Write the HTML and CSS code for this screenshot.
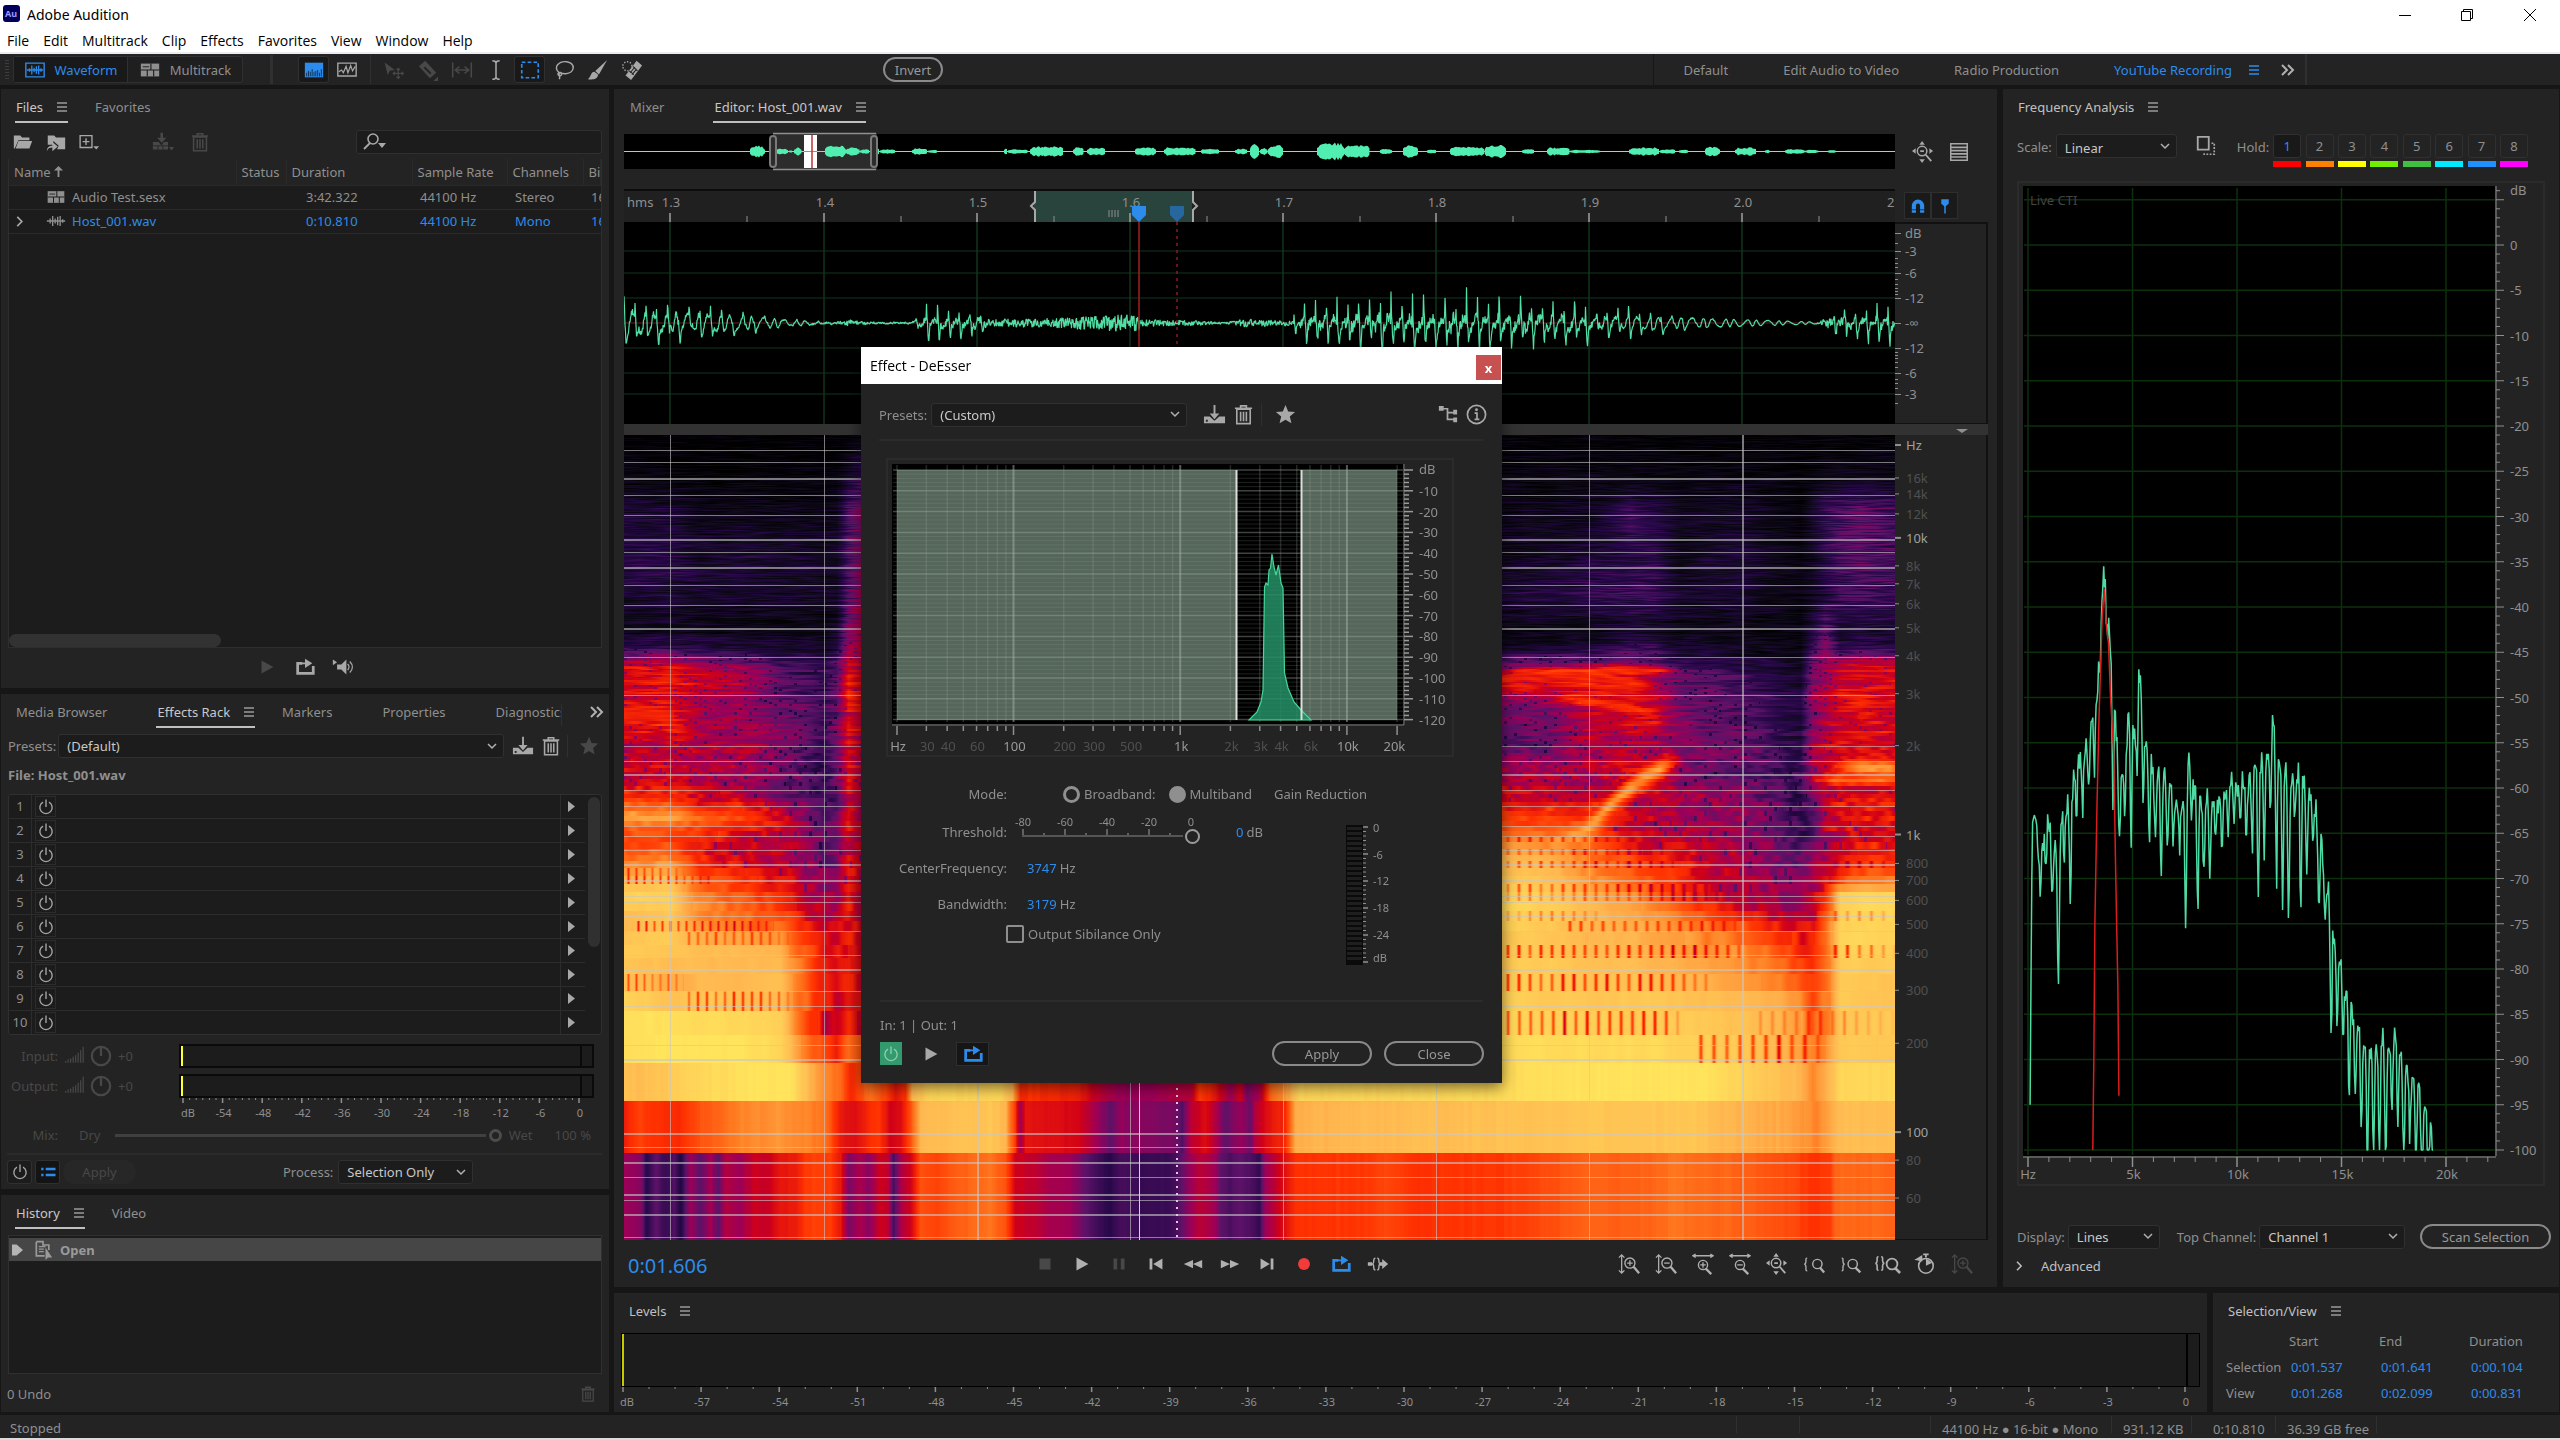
FILE: index.html
```html
<!DOCTYPE html>
<html lang="en">

<head>
    <meta charset="UTF-8">
    <meta name="viewport" content="width=device-width, initial-scale=1.0">
    <title>Adobe Audition</title>
    <link rel="stylesheet" href="styles.css">
</head>

<body>
    <!-- icon sprite -->
    <svg class="sprite" aria-hidden="true">
        <symbol id="i-menu" viewBox="0 0 10 10"><path d="M0 1h10M0 5h10M0 9h10" stroke="currentColor" stroke-width="1.4" /></symbol>
        <symbol id="i-more" viewBox="0 0 14 12"><path d="M1 1l5 5-5 5M7 1l5 5-5 5" fill="none" stroke="currentColor" stroke-width="2" /></symbol>
        <symbol id="i-wave" viewBox="0 0 24 24"><path d="M2 4.5h20v15H2z" fill="none" stroke="currentColor" stroke-width="1.5" /><path d="M3 12h18M6 10v4M8.5 7v10M11 9.5v5M13.5 8v8M16 7v10M18.5 10v4" stroke="currentColor" stroke-width="1.4" /></symbol>
        <symbol id="i-multi" viewBox="0 0 24 24"><path d="M2 5h20v14H2z" fill="currentColor" /><path d="M2 12h20M13 5v7M9 12v7M16 12v7" stroke="#1c1c1c" stroke-width="1.2" /><path d="M4 8.5h7" stroke="#1c1c1c" stroke-width="1" /></symbol>
        <symbol id="i-spectral" viewBox="0 0 24 24"><path d="M2 4h20v16H2z" fill="currentColor" /><path d="M4 19v-4M6 19v-6M8 19v-5M10 19v-8M12 19v-5M14 19v-6M16 19v-7M18 19v-4M20 19v-8" stroke="#10304f" stroke-width="1" /></symbol>
        <symbol id="i-pitch" viewBox="0 0 24 24"><path d="M2 4.5h20v14H2z" fill="none" stroke="currentColor" stroke-width="1.5" /><path d="M3 14l3-2 2 3 3-7 2 7 3-8 2 6 3-5" fill="none" stroke="currentColor" stroke-width="1.3" /></symbol>
        <symbol id="i-move" viewBox="0 0 26 24"><path d="M2 3l12 9-6 1-2.5 5z" fill="currentColor" /><path d="M18 10v12M12 16h12M16 12l2-2 2 2M16 20l2 2 2-2M14 14l-2 2 2 2M22 14l2 2-2 2" fill="none" stroke="currentColor" stroke-width="1.4" /></symbol>
        <symbol id="i-razor" viewBox="0 0 24 24"><path d="M2 8l7-6 12 13-7 6z" fill="currentColor" /><path d="M8 9l7 7" stroke="#232323" stroke-width="2" /><path d="M23 19v5h-5z" fill="currentColor" /></symbol>
        <symbol id="i-slip" viewBox="0 0 26 24"><path d="M2 3v18M24 3v18M6 12h14M10 8l-5 4 5 4M16 8l5 4-5 4" fill="none" stroke="currentColor" stroke-width="1.8" /></symbol>
        <symbol id="i-ibeam" viewBox="0 0 24 24"><path d="M8 2c2 0 4 .5 4 2.500v15c0 2-2 2.500-4 2.500M16 2c-2 0-4 .5-4 2.500v15c0 2 2 2.500 4 2.500" fill="none" stroke="currentColor" stroke-width="1.7" /></symbol>
        <symbol id="i-marquee" viewBox="0 0 24 24"><rect x="3" y="3.5" width="18" height="17" fill="none" stroke="currentColor" stroke-width="1.8" stroke-dasharray="4 2.4" /></symbol>
        <symbol id="i-lasso" viewBox="0 0 24 24"><path d="M7 15C-1 9 7 2 15 3c10 2 9 12-1 13-3 .3-5-.5-7-1zm0 0c2-1 3 1 2 2.500S5 18 5.500 16 8 19 7 22" fill="none" stroke="currentColor" stroke-width="1.6" /></symbol>
        <symbol id="i-brush" viewBox="0 0 24 24"><path d="M22 1L9 13l4 4zM8 14c-4 0-3 5-7 8 6 1 11 0 11-5z" fill="currentColor" /></symbol>
        <symbol id="i-heal" viewBox="0 0 24 24"><path d="M17 2l6 5L11 23l-6-5z" fill="currentColor" /><path d="M13 8l5 5M9 13l5 4M15 9l-5 6M17 11l-5 6" stroke="#232323" stroke-width="1.2" /><circle cx="7" cy="8" r="5" fill="none" stroke="currentColor" stroke-width="1.5" stroke-dasharray="1.5 1.7" /></symbol>
        <symbol id="i-folder" viewBox="0 0 24 24"><path d="M2 5h7l2 2h8v3H7L3 19H2z" fill="currentColor" /><path d="M7 11h15l-3 8H4z" fill="currentColor" /></symbol>
        <symbol id="i-import" viewBox="0 0 24 24"><path d="M3 5h7l2 2h10v13H13l2-4-6-5v4H3z" fill="currentColor" /><path d="M2 22c0-4 2-6 6-6v-4l6 5-6 5v-4c-3 0-5 1-6 4z" fill="currentColor" /></symbol>
        <symbol id="i-new" viewBox="0 0 26 24"><path d="M2.500 4.500h14v14h-14zM9.500 7.500v8M5.500 11.500h8" fill="none" stroke="currentColor" stroke-width="1.6" /><path d="M18 17h7l-3.500 4z" fill="currentColor" /></symbol>
        <symbol id="i-insert" viewBox="0 0 26 24"><path d="M1 12h7l3 4 3-4h5v9H1zM10 1h3v6h4l-5.500 6L6 7h4zM20 18h6l-3 4z" fill="currentColor" /><path d="M1 16.500h18M7 16v5M13 16v5" stroke="#232323" /></symbol>
        <symbol id="i-trash" viewBox="0 0 24 24"><path d="M5 6.500h14v15H5zM3 5.500h18M9 5V3h6v2M9 9v10M12 9v10M15 9v10" fill="none" stroke="currentColor" stroke-width="1.7" /></symbol>
        <symbol id="i-search" viewBox="0 0 24 20"><circle cx="10" cy="7" r="5" fill="none" stroke="currentColor" stroke-width="1.6" /><path d="M7 11l-6 6" stroke="currentColor" stroke-width="1.8" /><path d="M15 11h8l-4 5z" fill="currentColor" /></symbol>
        <symbol id="i-up" viewBox="0 0 12 12"><path d="M6 0l5 5H7v7H5V5H1z" fill="currentColor" /></symbol>
        <symbol id="i-clip" viewBox="0 0 24 24"><path d="M1 12h22M5 9v6M8 6v12M11 9v6M14 7v10M17 6v12M20 10v4" stroke="currentColor" stroke-width="1.6" /></symbol>
        <symbol id="i-chevron" viewBox="0 0 8 12"><path d="M1 1l5 5-5 5" fill="none" stroke="currentColor" stroke-width="1.8" /></symbol>
        <symbol id="i-play" viewBox="0 0 24 24"><path d="M6 5l13 7-13 7z" fill="currentColor" /></symbol>
        <symbol id="i-loop" viewBox="0 0 24 24"><path d="M9 8H4v11h17V11" fill="none" stroke="currentColor" stroke-width="3" /><path d="M8 7h4V3l8 5-8 5V9H8z" fill="currentColor" /></symbol>
        <symbol id="i-speaker" viewBox="0 0 26 24"><path d="M1 3v7l5-3.500zM6 9h5l6-6v18l-6-6H6z" fill="currentColor" /><path d="M18.500 8.500c2 2 2 5 0 7M21 5.500c4 4 4 9 0 13" fill="none" stroke="currentColor" stroke-width="1.6" /></symbol>
        <symbol id="i-save" viewBox="0 0 24 24"><path d="M1 14h6l5 4.500 5-4.500h6v7H1zM11 2h2v9h4l-5 6-5-6h4z" fill="currentColor" /><path d="M3 18.500h2" stroke="#232323" stroke-width="2" /></symbol>
        <symbol id="i-star" viewBox="0 0 24 24"><path d="M12 2l2.800 6.800 7.200.6-5.500 4.700 1.700 7.100L12 17.400l-6.200 3.800 1.700-7.100L2 9.400l7.200-.6z" fill="currentColor" /></symbol>
        <symbol id="i-power" viewBox="0 0 24 24"><path d="M8 5.500a8.200 8.200 0 1 0 8 0M12 2v10" fill="none" stroke="currentColor" stroke-width="1.8" /></symbol>
        <symbol id="i-ramp" viewBox="0 0 24 24"><path d="M2 20v-2M5 20v-4M8 20v-5M11 20v-7M14 20v-9M17 20V8M20 20V5M23 20V1" stroke="currentColor" stroke-width="1.5" /></symbol>
        <symbol id="i-knob" viewBox="0 0 24 24"><circle cx="12" cy="12" r="10" fill="none" stroke="currentColor" stroke-width="2.5" /><path d="M12 2v10" stroke="currentColor" stroke-width="2.5" /></symbol>
        <symbol id="i-list" viewBox="0 0 24 24"><path d="M3 8h3M3 16h3M9 8h13M9 16h13" stroke="currentColor" stroke-width="3.5" /></symbol>
        <symbol id="i-history" viewBox="0 0 24 24"><path d="M4 2h8v4h7v6M4 2v17h10" fill="none" stroke="currentColor" stroke-width="2" /><path d="M7 8h8M7 11h6M7 14h6" stroke="currentColor" stroke-width="1.5" /><path d="M15 9l8 12h-5l-3 3z" fill="currentColor" /></symbol>
        <symbol id="i-zoomfull" viewBox="0 0 24 24"><circle cx="11" cy="11" r="5.2" fill="none" stroke="currentColor" stroke-width="1.6" /><path d="M9 11h4M15 15l6 7" stroke="currentColor" stroke-width="2" /><path d="M11 0l3 4H8zM11 24l-3-4h6zM0 11l4-3v6zM23 11l-4-3v6z" fill="currentColor" /></symbol>
        <symbol id="i-rows" viewBox="0 0 24 24"><path d="M3 3h18v18H3z" fill="none" stroke="currentColor" stroke-width="1.6" /><path d="M3 7h18M3 10.500h18M3 14h18M3 17.500h18" stroke="currentColor" stroke-width="1.8" /></symbol>
        <symbol id="i-magnet" viewBox="0 0 24 24"><path d="M6.500 21v-9a5.500 6 0 0 1 11 0v9" fill="none" stroke="currentColor" stroke-width="5.5" /><path d="M3 17h7M14 17h7" stroke="#1a1a1a" /></symbol>
        <symbol id="i-pin" viewBox="0 0 24 24"><path d="M7 3h10v6l-5 4-5-4z" fill="currentColor" /><path d="M12 12v10" stroke="currentColor" stroke-width="2" /></symbol>
        <symbol id="i-copy" viewBox="0 0 24 24"><path d="M3 2h12v14H3z" fill="none" stroke="currentColor" stroke-width="2" /><path d="M18 9h3v12H10v-2" fill="none" stroke="currentColor" stroke-width="1.8" stroke-dasharray="2 1.6" /></symbol>
        <symbol id="i-stop" viewBox="0 0 24 24"><path d="M6 6h12v12H6z" fill="currentColor" /></symbol>
        <symbol id="i-pause" viewBox="0 0 24 24"><path d="M6 6h4v12H6zM14 6h4v12h-4z" fill="currentColor" /></symbol>
        <symbol id="i-start" viewBox="0 0 24 24"><path d="M5 6h3v12H5zM19 6v12l-10-6z" fill="currentColor" /></symbol>
        <symbol id="i-end" viewBox="0 0 24 24"><path d="M16 6h3v12h-3zM5 6v12l10-6z" fill="currentColor" /></symbol>
        <symbol id="i-rew" viewBox="0 0 24 24"><path d="M12 7.500v9L2 12zM22 7.500v9L12 12z" fill="currentColor" /></symbol>
        <symbol id="i-ff" viewBox="0 0 24 24"><path d="M2 7.500v9l10-4.500zM12 7.500v9l10-4.500z" fill="currentColor" /></symbol>
        <symbol id="i-rec" viewBox="0 0 24 24"><circle cx="12" cy="12" r="6.5" fill="currentColor" /></symbol>
        <symbol id="i-skip" viewBox="0 0 26 24"><path d="M1 10h5v4H1zM15 10h3V6l7 6-7 6v-4h-3z" fill="currentColor" /><path d="M10 5c-2 0-2 1-2 3s-.5 4-2 4c1.500 0 2 2 2 4s0 3 2 3M12 5c2 0 2 1 2 3s.5 4 2 4c-1.500 0-2 2-2 4s0 3-2 3" fill="none" stroke="currentColor" stroke-width="1.6" /></symbol>
        <symbol id="i-zin-v" viewBox="0 0 24 24"><path d="M4 3v18M1 5l3-3 3 3M1 19l3 3 3-3" fill="none" stroke="currentColor" stroke-width="1.4" /><circle cx="13" cy="11" r="5.5" fill="none" stroke="currentColor" stroke-width="1.5" /><path d="M10 11h6M13 8v6" stroke="currentColor" stroke-width="1.4" /><path d="M17 15l6 7" stroke="currentColor" stroke-width="2.5" /></symbol>
        <symbol id="i-zout-v" viewBox="0 0 24 24"><path d="M4 3v18M1 5l3-3 3 3M1 19l3 3 3-3" fill="none" stroke="currentColor" stroke-width="1.4" /><circle cx="13" cy="11" r="5.5" fill="none" stroke="currentColor" stroke-width="1.5" /><path d="M10 11h6" stroke="currentColor" stroke-width="1.4" /><path d="M17 15l6 7" stroke="currentColor" stroke-width="2.5" /></symbol>
        <symbol id="i-zin-h" viewBox="0 0 24 24"><path d="M2 3h20M4 1L1 3l3 2M20 1l3 2-3 2" fill="none" stroke="currentColor" stroke-width="1.4" /><circle cx="12" cy="13" r="5" fill="none" stroke="currentColor" stroke-width="1.5" /><path d="M9 13h6M12 10v6" stroke="currentColor" stroke-width="1.4" /><path d="M15 17l6 6" stroke="currentColor" stroke-width="2.5" /></symbol>
        <symbol id="i-zout-h" viewBox="0 0 24 24"><path d="M2 3h20M4 1L1 3l3 2M20 1l3 2-3 2" fill="none" stroke="currentColor" stroke-width="1.4" /><circle cx="12" cy="13" r="5" fill="none" stroke="currentColor" stroke-width="1.5" /><path d="M9 13h6" stroke="currentColor" stroke-width="1.4" /><path d="M15 17l6 6" stroke="currentColor" stroke-width="2.5" /></symbol>
        <symbol id="i-z-in" viewBox="0 0 26 24"><path d="M5 5c-2 0-1.500 2-1.500 4S3 12 1.500 12.500c1.500 0 2 1 2 3.500s-.5 4 1.500 4" fill="none" stroke="currentColor" stroke-width="1.6" /><circle cx="17" cy="12" r="5.5" fill="none" stroke="currentColor" stroke-width="1.7" /><path d="M20 16l5 6" stroke="currentColor" stroke-width="2.8" /></symbol>
        <symbol id="i-z-out" viewBox="0 0 26 24"><path d="M2 5c2 0 1.500 2 1.500 4s.5 3 2 3.500c-1.500 0-2 1-2 3.500s.5 4-1.500 4" fill="none" stroke="currentColor" stroke-width="1.6" /><circle cx="15" cy="12" r="5.5" fill="none" stroke="currentColor" stroke-width="1.7" /><path d="M18 16l6 6" stroke="currentColor" stroke-width="2.8" /></symbol>
        <symbol id="i-z-sel" viewBox="0 0 30 24"><path d="M5 4c-2 0-1.500 2-1.500 4S3 11 1.500 11.500c1.500 0 2 1 2 3.500s-.5 4 1.500 4M8 4c2 0 1.500 2 1.500 4s.5 3 2 3.500c-1.500 0-2 1-2 3.500s.5 4-1.500 4" fill="none" stroke="currentColor" stroke-width="1.8" /><circle cx="20" cy="12" r="6" fill="none" stroke="currentColor" stroke-width="2" /><path d="M23 16l6 6" stroke="currentColor" stroke-width="3" /></symbol>
        <symbol id="i-timer" viewBox="0 0 24 24"><circle cx="13" cy="14" r="8" fill="none" stroke="currentColor" stroke-width="1.7" /><path d="M13 14V6l7 4.500z" fill="currentColor" /><path d="M13 5V2M10 1.500h6M3 7l5-3v4z" stroke="currentColor" stroke-width="2" fill="currentColor" /></symbol>
        <symbol id="i-route" viewBox="0 0 24 24"><path d="M4 6h8v11h7M12 10h7" fill="none" stroke="currentColor" stroke-width="1.8" /><path d="M3 3h5v5H3zM18 7h4v5h-4zM18 15h4v5h-4z" fill="currentColor" /></symbol>
        <symbol id="i-info" viewBox="0 0 24 24"><circle cx="12" cy="12" r="9.5" fill="none" stroke="currentColor" stroke-width="1.8" /><path d="M10 10.500h2.500V17M10 17h5" fill="none" stroke="currentColor" stroke-width="1.8" /><circle cx="12" cy="7" r="1.5" fill="currentColor" /></symbol>
    </svg>

    <header class="titlebar">
        <svg class="app-logo" viewBox="0 0 17 17"><rect width="17" height="17" rx="3" fill="#00005b" /><text x="8" y="12" text-anchor="middle" class="logo-text">Au</text></svg>
        <h1>Adobe Audition</h1>
        <div class="window-controls">
            <button type="button" aria-label="Minimize"><svg viewBox="0 0 14 14"><path d="M1 7.500h12" /></svg></button>
            <button type="button" aria-label="Restore"><svg viewBox="0 0 14 14"><path d="M1.500 3.500h9v9h-9zM3.500 3.500v-2h9v9h-2" /></svg></button>
            <button type="button" aria-label="Close window"><svg viewBox="0 0 14 14"><path d="M1 1l12 12M13 1L1 13" /></svg></button>
        </div>
    </header>
    <nav class="menubar">
        <a href="#">File</a><a href="#">Edit</a><a href="#">Multitrack</a><a href="#">Clip</a><a href="#">Effects</a><a href="#">Favorites</a><a href="#">View</a><a href="#">Window</a><a href="#">Help</a>
    </nav>

    <div class="toolbar">
        <span class="grip"></span>
        <div class="mode-switch">
            <button type="button" class="active"><svg class="ic"><use href="#i-wave" /></svg>Waveform</button>
            <button type="button"><svg class="ic"><use href="#i-multi" /></svg>Multitrack</button>
        </div>
        <span class="divider wide"></span>
        <div class="tool-group">
            <button type="button" class="tool on" aria-label="Spectral frequency"><svg class="ic"><use href="#i-spectral" /></svg></button>
            <button type="button" class="tool" aria-label="Spectral pitch"><svg class="ic"><use href="#i-pitch" /></svg></button>
        </div>
        <span class="divider"></span>
        <div class="tool-group tools">
            <button type="button" class="tool" disabled aria-label="Move"><svg class="ic"><use href="#i-move" /></svg></button>
            <button type="button" class="tool" disabled aria-label="Razor"><svg class="ic"><use href="#i-razor" /></svg></button>
            <button type="button" class="tool" disabled aria-label="Slip"><svg class="ic"><use href="#i-slip" /></svg></button>
            <button type="button" class="tool" aria-label="Time selection"><svg class="ic"><use href="#i-ibeam" /></svg></button>
            <button type="button" class="tool on" aria-label="Marquee"><svg class="ic"><use href="#i-marquee" /></svg></button>
            <button type="button" class="tool" aria-label="Lasso"><svg class="ic"><use href="#i-lasso" /></svg></button>
            <button type="button" class="tool" aria-label="Brush"><svg class="ic"><use href="#i-brush" /></svg></button>
            <button type="button" class="tool" aria-label="Spot healing"><svg class="ic"><use href="#i-heal" /></svg></button>
        </div>
        <button type="button" class="pill invert">Invert</button>
        <nav class="workspaces">
            <a href="#">Default</a>
            <a href="#">Edit Audio to Video</a>
            <a href="#">Radio Production</a>
            <a href="#" class="current">YouTube Recording</a>
            <svg class="burger blue"><use href="#i-menu" /></svg>
            <svg class="more"><use href="#i-more" /></svg>
        </nav>
    </div>

    <main class="workspace">
        <div class="left-col">
            <section class="panel files">
                <div class="tabs">
                    <a href="#" class="tab current">Files<svg class="burger"><use href="#i-menu" /></svg></a>
                    <a href="#" class="tab">Favorites</a>
                </div>
                <div class="files-tools">
                    <button type="button" aria-label="Open file"><svg class="ic"><use href="#i-folder" /></svg></button>
                    <button type="button" aria-label="Import file"><svg class="ic"><use href="#i-import" /></svg></button>
                    <button type="button" aria-label="New file"><svg class="ic"><use href="#i-new" /></svg></button>
                    <button type="button" class="insert" disabled aria-label="Insert into multitrack"><svg class="ic"><use href="#i-insert" /></svg></button>
                    <button type="button" disabled aria-label="Close files"><svg class="ic"><use href="#i-trash" /></svg></button>
                    <label class="search"><svg><use href="#i-search" /></svg><input type="text" aria-label="Search files"></label>
                </div>
                <div class="file-list">
                    <table>
                        <colgroup><col class="c-name"><col class="c-status"><col class="c-dur"><col class="c-rate"><col class="c-ch"><col></colgroup>
                        <thead>
                            <tr><th>Name<svg class="sort"><use href="#i-up" /></svg></th><th>Status</th><th>Duration</th><th>Sample Rate</th><th>Channels</th><th>Bit</th></tr>
                        </thead>
                        <tbody>
                            <tr>
                                <td><span class="fname"><span class="twirl"></span><svg class="ic"><use href="#i-multi" /></svg>Audio Test.sesx</span></td>
                                <td></td><td class="num">3:42.322</td><td>44100 Hz</td><td>Stereo</td><td>16</td>
                            </tr>
                            <tr class="open">
                                <td><span class="fname"><svg class="twirl"><use href="#i-chevron" /></svg><svg class="ic"><use href="#i-clip" /></svg>Host_001.wav</span></td>
                                <td></td><td class="num">0:10.810</td><td>44100 Hz</td><td>Mono</td><td>16</td>
                            </tr>
                        </tbody>
                    </table>
                    <div class="hscroll"></div>
                </div>
                <div class="preview">
                    <button type="button" disabled aria-label="Play preview"><svg class="ic"><use href="#i-play" /></svg></button>
                    <button type="button" aria-label="Loop preview"><svg class="ic"><use href="#i-loop" /></svg></button>
                    <button type="button" aria-label="Auto-play"><svg class="ic"><use href="#i-speaker" /></svg></button>
                </div>
            </section>

            <section class="panel rack">
                <div class="tabs">
                    <a href="#" class="tab">Media Browser</a>
                    <a href="#" class="tab current">Effects Rack<svg class="burger"><use href="#i-menu" /></svg></a>
                    <a href="#" class="tab">Markers</a>
                    <a href="#" class="tab">Properties</a>
                    <a href="#" class="tab cut">Diagnostics</a>
                    <svg class="more"><use href="#i-more" /></svg>
                </div>
                <div class="presets">
                    <label for="rack-preset">Presets:</label>
                    <select id="rack-preset"><option>(Default)</option></select>
                    <button type="button" aria-label="Save preset"><svg class="ic"><use href="#i-save" /></svg></button>
                    <button type="button" aria-label="Delete preset"><svg class="ic"><use href="#i-trash" /></svg></button>
                    <button type="button" class="fav" disabled aria-label="Favorite"><svg class="ic"><use href="#i-star" /></svg></button>
                </div>
                <p class="rack-file">File: Host_001.wav</p>
                <div class="slots">
                    <ol id="slots"></ol>
                    <div class="vscroll"></div>
                </div>
                <div class="io">
                    <div class="io-row">
                        <span class="io-label">Input:</span><svg><use href="#i-ramp" /></svg><svg><use href="#i-knob" /></svg><span>+0</span>
                        <div class="meter"></div>
                    </div>
                    <div class="io-row">
                        <span class="io-label">Output:</span><svg><use href="#i-ramp" /></svg><svg><use href="#i-knob" /></svg><span>+0</span>
                        <div class="meter"></div>
                    </div>
                    <svg id="io-scale" class="io-scale"></svg>
                    <div class="mix">
                        <label for="mix">Mix:</label><span>Dry</span>
                        <input type="range" id="mix" value="100" disabled>
                        <span>Wet</span><span class="pct">100 %</span>
                    </div>
                </div>
                <div class="rack-foot">
                    <button type="button" class="sq" aria-label="Rack power"><svg class="ic"><use href="#i-power" /></svg></button>
                    <button type="button" class="sq on" aria-label="Show list"><svg class="ic"><use href="#i-list" /></svg></button>
                    <button type="button" class="ghost" disabled>Apply</button>
                    <label for="process">Process:</label>
                    <select id="process"><option>Selection Only</option></select>
                </div>
            </section>

            <section class="panel history">
                <div class="tabs">
                    <a href="#" class="tab current">History<svg class="burger"><use href="#i-menu" /></svg></a>
                    <a href="#" class="tab">Video</a>
                </div>
                <div class="history-list">
                    <div class="history-item"><svg class="mark" viewBox="0 0 12 12"><path d="M0 0h5l7 6-7 6H0z" fill="currentColor" /></svg><svg class="ic"><use href="#i-history" /></svg>Open</div>
                </div>
                <div class="history-foot">
                    <span>0 Undo</span>
                    <button type="button" disabled aria-label="Delete"><svg class="ic"><use href="#i-trash" /></svg></button>
                </div>
            </section>
        </div>

        <div class="right-col">
            <div class="upper">
                <section class="panel editor">
                    <div class="tabs">
                        <a href="#" class="tab">Mixer</a>
                        <a href="#" class="tab current">Editor: Host_001.wav<svg class="burger"><use href="#i-menu" /></svg></a>
                    </div>
                    <div class="editor-grid">
                        <svg id="overview" class="overview"></svg>
                        <div class="ov-tools">
                            <button type="button" aria-label="Zoom full"><svg class="ic"><use href="#i-zoomfull" /></svg></button>
                            <button type="button" aria-label="Track view"><svg class="ic"><use href="#i-rows" /></svg></button>
                        </div>
                        <svg id="ruler" class="ruler"></svg>
                        <div class="snap">
                            <button type="button" aria-label="Snapping"><svg class="ic"><use href="#i-magnet" /></svg></button>
                            <button type="button" aria-label="Pin"><svg class="ic"><use href="#i-pin" /></svg></button>
                        </div>
                        <svg id="wave" class="wave"></svg>
                        <svg id="db-scale" class="side-scale top"></svg>
                        <div class="splitter"><svg viewBox="0 0 12 4"><path d="M0 0h12L6 4z" fill="#8f8f8f" /></svg></div>
                        <div class="spectral"><canvas id="spectral"></canvas></div>
                        <svg id="hz-scale" class="side-scale"></svg>
                    </div>
                    <div class="transport">
                        <output class="timecode">0:01.606</output>
                        <div class="btns play-btns">
                            <button type="button" disabled aria-label="Stop"><svg class="ic"><use href="#i-stop" /></svg></button>
                            <button type="button" aria-label="Play"><svg class="ic"><use href="#i-play" /></svg></button>
                            <button type="button" disabled aria-label="Pause"><svg class="ic"><use href="#i-pause" /></svg></button>
                            <button type="button" aria-label="Go to start"><svg class="ic"><use href="#i-start" /></svg></button>
                            <button type="button" aria-label="Rewind"><svg class="ic"><use href="#i-rew" /></svg></button>
                            <button type="button" aria-label="Fast forward"><svg class="ic"><use href="#i-ff" /></svg></button>
                            <button type="button" aria-label="Go to end"><svg class="ic"><use href="#i-end" /></svg></button>
                            <button type="button" class="rec" aria-label="Record"><svg class="ic"><use href="#i-rec" /></svg></button>
                            <button type="button" class="lit" aria-label="Loop"><svg class="ic"><use href="#i-loop" /></svg></button>
                            <button type="button" aria-label="Skip selection"><svg class="ic"><use href="#i-skip" /></svg></button>
                        </div>
                        <div class="btns zoom-btns">
                            <button type="button" aria-label="Zoom in amplitude"><svg class="ic"><use href="#i-zin-v" /></svg></button>
                            <button type="button" aria-label="Zoom out amplitude"><svg class="ic"><use href="#i-zout-v" /></svg></button>
                            <button type="button" aria-label="Zoom in time"><svg class="ic"><use href="#i-zin-h" /></svg></button>
                            <button type="button" aria-label="Zoom out time"><svg class="ic"><use href="#i-zout-h" /></svg></button>
                            <button type="button" aria-label="Zoom out full"><svg class="ic"><use href="#i-zoomfull" /></svg></button>
                            <button type="button" aria-label="Zoom to in point"><svg class="ic"><use href="#i-z-in" /></svg></button>
                            <button type="button" aria-label="Zoom to out point"><svg class="ic"><use href="#i-z-out" /></svg></button>
                            <button type="button" aria-label="Zoom to selection"><svg class="ic big"><use href="#i-z-sel" /></svg></button>
                            <button type="button" aria-label="Zoom to time"><svg class="ic"><use href="#i-timer" /></svg></button>
                            <button type="button" disabled aria-label="Zoom selected track"><svg class="ic"><use href="#i-zin-v" /></svg></button>
                        </div>
                    </div>
                </section>

                <section class="panel freq">
                    <div class="tabs">
                        <span class="tab title">Frequency Analysis<svg class="burger"><use href="#i-menu" /></svg></span>
                    </div>
                    <div class="freq-top">
                        <label for="scale">Scale:</label>
                        <select id="scale"><option>Linear</option></select>
                        <button type="button" class="copy" aria-label="Copy data"><svg class="ic"><use href="#i-copy" /></svg></button>
                        <span class="hold-label">Hold:</span>
                        <div class="holds">
                            <button type="button" class="h1 on">1</button><button type="button" class="h2">2</button><button type="button" class="h3">3</button><button type="button" class="h4">4</button><button type="button" class="h5">5</button><button type="button" class="h6">6</button><button type="button" class="h7">7</button><button type="button" class="h8">8</button>
                        </div>
                    </div>
                    <svg id="freq-plot" class="freq-plot"></svg>
                    <div class="freq-bottom">
                        <label for="display">Display:</label>
                        <select id="display"><option>Lines</option></select>
                        <label for="channel">Top Channel:</label>
                        <select id="channel"><option>Channel 1</option></select>
                        <button type="button" class="pill">Scan Selection</button>
                    </div>
                    <button type="button" class="advanced"><svg><use href="#i-chevron" /></svg>Advanced</button>
                </section>
            </div>

            <div class="lower">
                <section class="panel levels">
                    <div class="tabs"><span class="tab title">Levels<svg class="burger"><use href="#i-menu" /></svg></span></div>
                    <div class="level-meter"></div>
                    <svg id="level-scale" class="level-scale"></svg>
                </section>
                <section class="panel selview">
                    <div class="tabs"><span class="tab title">Selection/View<svg class="burger"><use href="#i-menu" /></svg></span></div>
                    <table>
                        <thead><tr><td></td><th>Start</th><th>End</th><th>Duration</th></tr></thead>
                        <tbody>
                            <tr><th>Selection</th><td>0:01.537</td><td>0:01.641</td><td>0:00.104</td></tr>
                            <tr><th>View</th><td>0:01.268</td><td>0:02.099</td><td>0:00.831</td></tr>
                        </tbody>
                    </table>
                </section>
            </div>
        </div>
    </main>

    <footer class="statusbar">
        <span class="state">Stopped</span>
        <span class="cell s1"></span><span class="cell s2"></span>
        <span class="cell s3">44100 Hz ● 16-bit ● Mono</span>
        <span class="cell s4">931.12 KB</span>
        <span class="cell s5">0:10.810</span>
        <span class="cell s6">36.39 GB free</span>
    </footer>

    <div class="dialog" role="dialog" aria-labelledby="dlg-title">
        <div class="dlg-head">
            <h2 id="dlg-title">Effect - DeEsser</h2>
            <button type="button">x</button>
        </div>
        <div class="dlg-presets">
            <label for="dlg-preset">Presets:</label>
            <select id="dlg-preset"><option>(Custom)</option></select>
            <button type="button" aria-label="Save preset"><svg class="ic"><use href="#i-save" /></svg></button>
            <button type="button" aria-label="Delete preset"><svg class="ic"><use href="#i-trash" /></svg></button>
            <button type="button" class="fav" aria-label="Favorite"><svg class="ic"><use href="#i-star" /></svg></button>
            <button type="button" class="route" aria-label="Channel map"><svg class="ic"><use href="#i-route" /></svg></button>
            <button type="button" aria-label="Info"><svg class="ic"><use href="#i-info" /></svg></button>
        </div>
        <svg id="dlg-plot" class="dlg-plot"></svg>
        <div class="dlg-controls">
            <div class="params">
                <div class="param mode">
                    <span class="p-label">Mode:</span>
                    <label class="radio first"><input type="radio" name="mode">Broadband:</label>
                    <label class="radio"><input type="radio" name="mode" checked>Multiband</label>
                </div>
                <div class="param">
                    <label class="p-label" for="threshold">Threshold:</label>
                    <div class="slider"><svg id="slider-scale"></svg><input type="range" id="threshold" min="-80" max="0" value="0"></div>
                    <span class="value">0</span><span>dB</span>
                </div>
                <div class="param"><span class="p-label">CenterFrequency:</span><span class="value">3747</span><span>Hz</span></div>
                <div class="param"><span class="p-label">Bandwidth:</span><span class="value">3179</span><span>Hz</span></div>
                <label class="check"><input type="checkbox">Output Sibilance Only</label>
            </div>
            <div class="gain">
                <span>Gain Reduction</span>
                <svg id="gain-meter"></svg>
            </div>
        </div>
        <div class="dlg-foot">
            <p>In: 1 | Out: 1</p>
            <div class="dlg-btns">
                <button type="button" class="pw" aria-label="Effect power"><svg class="ic"><use href="#i-power" /></svg></button>
                <button type="button" class="pl" aria-label="Play"><svg class="ic"><use href="#i-play" /></svg></button>
                <button type="button" class="lp" aria-label="Loop"><svg class="ic"><use href="#i-loop" /></svg></button>
                <button type="button" class="pill">Apply</button>
                <button type="button" class="pill">Close</button>
            </div>
        </div>
    </div>

    <script src="script.js"></script>
</body>

</html>
```
FILE: styles.css
```css
* {
    box-sizing: border-box;
}

body {
    margin: 0;
    height: 100vh;
    display: flex;
    flex-direction: column;
    overflow: hidden;
    background: #161616;
    color: #8f8f8f;
    font: 13px/16px "Noto Sans", "Open Sans", sans-serif;
    border-bottom: 2px solid #dcdcdc;
}

h1, h2, p, ol {
    margin: 0;
    padding: 0;
    font-weight: normal;
}

a {
    color: inherit;
    text-decoration: none;
}

button {
    background: none;
    border: 0;
    padding: 0;
    color: #a8a8a8;
    font: inherit;
    display: inline-flex;
    align-items: center;
    justify-content: center;
}

button:disabled {
    color: #484848;
}

select {
    appearance: none;
    height: 24px;
    padding: 0 20px 0 8px;
    color: #c8c8c8;
    font: inherit;
    border: 1px solid #303030;
    border-radius: 3px;
    background: #1c1c1c url("data:image/svg+xml,%3Csvg xmlns='http://www.w3.org/2000/svg' width='10' height='7'%3E%3Cpath d='M1 1l4 4 4-4' fill='none' stroke='%23b0b0b0' stroke-width='1.5'/%3E%3C/svg%3E") no-repeat right 6px center;
}

svg text {
    font-family: "Noto Sans", "Open Sans", sans-serif;
}

.sprite {
    display: none;
}

.ic {
    width: 22px;
    height: 22px;
    flex: none;
}

.ic.big {
    width: 27px;
}

.burger {
    width: 10px;
    height: 10px;
    margin-left: 14px;
    color: #9a9a9a;
}

.blue {
    color: #2d8ceb;
}

.more {
    width: 14px;
    height: 12px;
    color: #b0b0b0;
}

.pill {
    height: 25px;
    border: 2px solid #8a8a8a;
    border-radius: 13px;
    color: #989898;
}

/* window chrome */
.titlebar {
    display: flex;
    align-items: center;
    height: 30px;
    padding-left: 3px;
    background: #fff;
    color: #000;
}

.titlebar h1 {
    flex: 1;
    margin-left: 7px;
    font: 14px/28px "Noto Sans", sans-serif;
}

.app-logo {
    width: 17px;
    height: 17px;
    margin-bottom: 3px;
}

.logo-text {
    fill: #9a9aff;
    font-size: 9px;
    font-weight: bold;
}

.window-controls {
    margin-right: 1px;
}

.window-controls button {
    width: 59px;
    height: 28px;
}

.window-controls svg {
    width: 14px;
    height: 14px;
    fill: none;
    stroke: #000;
}

.menubar {
    display: flex;
    gap: 14px;
    height: 24px;
    padding-left: 7px;
    background: #fff;
    border-bottom: 2px solid #ebebf0;
    color: #000;
    font: 14px/22px "Open Sans", sans-serif;
}

/* toolbar */
.toolbar {
    display: flex;
    align-items: center;
    height: 31px;
    margin-bottom: 4px;
    background: #232323;
}

.grip {
    width: 4px;
    height: 20px;
    margin: 0 4px 0 5px;
    background: repeating-linear-gradient(#3c3c3c 0 1px, #232323 1px 3px);
}

.mode-switch {
    display: flex;
    height: 27px;
    border: 1px solid #303030;
    border-radius: 3px;
    background: #1f1f1f;
}

.mode-switch button {
    width: 114px;
    gap: 9px;
    color: #8f8f8f;
}

.mode-switch button.active {
    color: #2d8ceb;
    background: #191919;
    border-right: 1px solid #303030;
}

.divider {
    width: 1px;
    height: 29px;
    background: #303030;
}

.divider.wide {
    width: 3px;
    margin: 0 25px 0 27px;
}

.tool-group {
    display: flex;
    gap: 2px;
    margin-right: 8px;
}

.tool {
    width: 31px;
    height: 27px;
    border: 1px solid transparent;
    border-radius: 3px;
}

.tool.on {
    color: #2d8ceb;
    background: #191919;
    border-color: #303030;
}

.tools {
    gap: 3px;
    margin-left: 7px;
    flex: 0 0 497px;
}

.invert {
    width: 60px;
}

.workspaces {
    display: flex;
    align-items: center;
    height: 31px;
    margin-left: auto;
    padding: 0 10px 0 29px;
    border-left: 1px solid #161616;
    border-right: 2px solid #303030;
    margin-right: 253px;
}

.workspaces a {
    margin-right: 55px;
}

.workspaces .current {
    margin-right: 3px;
    color: #2d8ceb;
}

.workspaces .more {
    margin-left: 22px;
}

/* panels */
.workspace {
    flex: 1;
    min-height: 0;
    display: grid;
    grid-template-columns: 608fr 1945fr;
    gap: 5px;
    padding: 0 1px;
}

.left-col, .right-col {
    display: flex;
    flex-direction: column;
    gap: 6px;
    min-height: 0;
    min-width: 0;
}

.panel {
    background: #232323;
    min-width: 0;
    display: flex;
    flex-direction: column;
}

.tabs {
    display: flex;
    align-items: flex-start;
    gap: 26px;
    height: 40px;
    padding: 10px 0 0 14px;
    flex: none;
    white-space: nowrap;
}

.tab {
    padding: 0 1px 6px;
}

.tab.current {
    color: #c8c8c8;
    border-bottom: 2px solid #c0c0c0;
}

.tab.title {
    color: #c0c0c0;
}

/* files */
.files {
    flex: 1;
}

.files-tools {
    display: flex;
    align-items: center;
    height: 26px;
    padding: 0 7px 0 11px;
    gap: 11px;
}

.insert {
    margin-left: 41px;
}

.insert + button {
    margin-left: 4px;
}

.search {
    display: flex;
    align-items: center;
    width: 246px;
    height: 24px;
    margin-left: auto;
    border: 1px solid #303030;
    border-radius: 3px;
    background: #1c1c1c;
}

.search svg {
    width: 24px;
    height: 20px;
    margin-left: 6px;
    color: #a8a8a8;
}

.search input {
    flex: 1;
    min-width: 0;
    border: 0;
    background: none;
    color: #c8c8c8;
}

.file-list {
    flex: 1;
    display: flex;
    flex-direction: column;
    justify-content: space-between;
    margin: 4px 7px 0;
    border: 1px solid #2e2e2e;
    border-top: 0;
    background: #1c1c1c;
    overflow: hidden;
}

.file-list table {
    width: 100%;
    table-layout: fixed;
    border-collapse: collapse;
}

.c-name { width: 227px; }
.c-status { width: 50px; }
.c-dur { width: 126px; }
.c-rate { width: 95px; }
.c-ch { width: 76px; }

.file-list th, .file-list td {
    height: 24px;
    padding: 0 0 0 8px;
    font-weight: normal;
    text-align: left;
    white-space: nowrap;
    overflow: hidden;
    border-bottom: 1px solid #2a2a2a;
}

.file-list th {
    height: 26px;
    padding-left: 5px;
    background: #232323;
    border-right: 1px solid #2a2a2a;
}

.file-list .num {
    padding-left: 20px;
}

.file-list td:first-child {
    padding-left: 7px;
}

.sort {
    width: 11px;
    height: 11px;
    margin-left: 2px;
}

.fname {
    display: flex;
    align-items: center;
    gap: 6px;
}

.fname .ic {
    width: 20px;
    height: 20px;
    color: #8f8f8f;
}

.twirl {
    width: 8px;
    height: 11px;
    margin-right: 16px;
    color: #a8a8a8;
}

.open td {
    color: #2d8ceb;
}

.hscroll {
    width: 212px;
    height: 13px;
    border-radius: 7px;
    background: #323232;
}

.preview {
    display: flex;
    align-items: center;
    gap: 16px;
    height: 40px;
    padding: 0 0 2px 255px;
}

/* effects rack */
.rack .tabs {
    padding-right: 5px;
}

.rack .tabs .tab {
    margin-right: 22px;
}

.rack .tabs .tab.current {
    margin-right: 0;
}

.rack .tabs .cut {
    width: 67px;
    overflow: hidden;
    border-right: 1px solid #303030;
    margin-right: 0;
}

.rack .more {
    margin-left: auto;
    align-self: flex-start;
    margin-top: 2px;
}

.presets {
    display: flex;
    align-items: center;
    height: 24px;
    padding: 0 7px;
}

.presets select {
    flex: 1;
    margin: 0 5px 0 2px;
}

.presets button {
    width: 28px;
}

.presets .fav {
    margin-left: 2px;
    border-left: 1px solid #303030;
    width: 35px;
}

.presets .fav svg {
    margin-left: 8px;
}

.rack-file {
    height: 36px;
    padding: 9px 7px;
    font-weight: bold;
}

.slots {
    display: flex;
    margin: 0 7px;
    border: 1px solid #303030;
    border-radius: 3px;
    background: #1c1c1c;
}

.slots ol {
    flex: 1;
    list-style: none;
}

.slots li {
    display: flex;
    align-items: center;
    height: 24px;
    border-bottom: 1px solid #2c2c2c;
}

.slots li:last-child {
    height: 23px;
    border-bottom: 0;
}

.slots .n {
    width: 23px;
    height: 23px;
    line-height: 23px;
    text-align: center;
    border-right: 1px solid #2c2c2c;
}

.slots .pw {
    width: 21px;
    height: 21px;
    margin-left: 3px;
    border: 1px solid #2c2c2c;
}

.slots .pw .ic {
    width: 18px;
    height: 18px;
}

.slots .go {
    width: 25px;
    height: 23px;
    margin-left: auto;
    border-left: 1px solid #2c2c2c;
}

.slots .go svg {
    width: 7px;
    height: 11px;
    margin-right: 4px;
}

.vscroll {
    width: 12px;
    height: 150px;
    margin: 2px 1px 0 3px;
    border-radius: 6px;
    background: #303030;
}

.io {
    padding: 9px 15px 0 10px;
    color: #484848;
}

.io-row {
    display: flex;
    align-items: center;
    gap: 6px;
    height: 24px;
    margin-bottom: 6px;
}

.io-row svg {
    width: 20px;
    height: 20px;
}

.io-row svg + svg {
    width: 22px;
    height: 22px;
}

.io-label {
    width: 47px;
    text-align: right;
}

.meter {
    flex: 1;
    height: 24px;
    margin-left: 38px;
    border: 2px solid #0a0a0a;
    background: linear-gradient(90deg, #ffff30 0 2px, transparent 2px calc(100% - 12px), #0a0a0a calc(100% - 12px) calc(100% - 10px), transparent 0) #1c1c1c;
}

.io-row > span:not(.io-label) {
    width: 17px;
}

.io-scale {
    display: block;
    width: 418px;
    height: 24px;
    margin: -6px 0 0 auto;
}

.mix {
    display: flex;
    align-items: center;
    height: 26px;
}

.mix label {
    width: 47px;
    text-align: right;
    margin-right: 21px;
}

.mix input {
    appearance: none;
    flex: 1;
    height: 14px;
    margin: 0 7px 0 14px;
    background: linear-gradient(#404040, #404040) no-repeat 0 6px / calc(100% - 16px) 3px;
}

.mix input::-webkit-slider-thumb {
    appearance: none;
    width: 13px;
    height: 13px;
    border: 3px solid #4c4c4c;
    border-radius: 50%;
}

.mix .pct {
    margin-left: 22px;
    margin-right: 3px;
}

.rack-foot {
    display: flex;
    align-items: center;
    margin: 5px 7px 0 6px;
    padding: 5px 0;
    border-top: 2px solid #2b2b2b;
}

.sq {
    width: 25px;
    height: 24px;
    margin-right: 3px;
    border: 1px solid #303030;
    border-radius: 3px;
    background: #1c1c1c;
}

.sq.on {
    background: #141414;
}

.sq .ic {
    width: 18px;
    height: 18px;
}

.sq.on, .lit {
    color: #2d8ceb;
}

.ghost {
    width: 73px;
    height: 24px;
    border-radius: 12px;
    background: #272727;
    color: #424242;
}

.rack-foot label {
    margin: 0 5px 0 147px;
}

.rack-foot select {
    width: 135px;
}

/* history */
.history {
    flex: 0 0 217px;
}

.history-list {
    flex: 1;
    margin: 0 7px;
    padding-top: 2px;
    border: 1px solid #303030;
    background: #1c1c1c;
}

.history-item {
    display: flex;
    align-items: center;
    height: 23px;
    padding-left: 3px;
    background: #464646;
    font-weight: bold;
    color: #9a9a9a;
}

.history-item .ic {
    margin: 0 7px 0 10px;
    width: 20px;
    height: 20px;
}

.mark {
    width: 11px;
    height: 12px;
    color: #b4b4b4;
}

.history-foot {
    display: flex;
    align-items: center;
    justify-content: space-between;
    height: 38px;
    padding: 2px 12px 0 6px;
}

.history-foot .ic {
    width: 18px;
    height: 18px;
}

/* editor */
.upper, .lower {
    display: grid;
    gap: 6px;
}

.upper {
    flex: 1;
    min-height: 0;
    grid-template-columns: 1383fr 556fr;
}

.lower {
    height: 119px;
    grid-template-columns: 1593fr 346fr;
}

.editor .tabs, .freq .tabs {
    height: 45px;
}

.editor .tabs {
    gap: 48px;
    padding-left: 15px;
}

.editor .tab.current {
    padding-right: 0;
}

.editor-grid {
    flex: 1;
    min-height: 0;
    display: grid;
    grid-template-columns: 1fr 93px;
    grid-template-rows: 35px 53px 202fr 11px 805fr;
    margin: 0 9px 0 10px;
}

.editor-grid > * {
    min-width: 0;
    min-height: 0;
    width: 100%;
    height: 100%;
}

.overview {
    background: #000;
    overflow: visible;
}

.ov-tools {
    display: flex;
    align-items: center;
    gap: 14px;
    padding-left: 17px;
}

.ruler, .snap {
    padding-top: 20px;
}

.snap {
    display: flex;
    align-items: center;
    padding-left: 9px;
}

.snap button {
    width: 27px;
    height: 27px;
    border: 1px solid #2e2e2e;
    background: #1a1a1a;
    color: #2d8ceb;
}

.snap .ic {
    width: 18px;
    height: 18px;
}

.wave {
    background: #000;
}

.side-scale {
    border-right: 2px solid #111;
    border-bottom: 1px solid #111;
}

.side-scale.top {
    border-top: 2px solid #111;
}

.splitter {
    grid-column: span 2;
    background: #323232;
    text-align: right;
    padding-right: 20px;
    line-height: 8px;
}

.splitter svg {
    width: 12px;
    height: 4px;
}

.spectral {
    position: relative;
    background: #000;
}

.spectral canvas {
    position: absolute;
    inset: 0;
    width: 100%;
    height: 100%;
}

.transport {
    display: grid;
    grid-template-columns: 77px 321fr auto 214fr auto;
    align-items: center;
    height: 47px;
    padding: 0 17px 0 14px;
}

.timecode {
    font: 20px/24px "Noto Sans", sans-serif;
    color: #2d8ceb;
    padding-top: 5px;
}

.btns {
    display: flex;
}

.btns button {
    width: 37px;
    height: 26px;
    color: #b0b0b0;
}

.btns button:disabled {
    color: #484848;
}

.btns .lit {
    color: #2d8ceb;
}

.btns .rec {
    color: #f23c3c;
}

.play-btns {
    grid-column: 3;
}

.zoom-btns {
    grid-column: 5;
}

/* frequency analysis */
.freq-top {
    display: flex;
    align-items: flex-start;
    line-height: 26px;
    padding: 0 0 0 14px;
    height: 47px;
}

.freq-top select {
    width: 121px;
    margin-left: 4px;
}

.copy {
    height: 24px;
    margin: 0 20px 0 18px;
}

.holds {
    display: flex;
    flex: 1;
    justify-content: space-between;
    margin: 0 31px 0 4px;
}

.holds button {
    width: 28px;
    height: 24px;
    border: 1px solid #303030;
    border-radius: 3px;
    color: #8f8f8f;
    position: relative;
}

.holds button::after {
    content: "";
    position: absolute;
    left: -1px;
    right: -1px;
    top: 26px;
    height: 6px;
    background: var(--bar);
}

.holds .on {
    background: #191919;
    color: #2d8ceb;
}

.h1 { --bar: #f00; }
.h2 { --bar: #ff8000; }
.h3 { --bar: #ff0; }
.h4 { --bar: #70f000; }
.h5 { --bar: #40c040; }
.h6 { --bar: #00eaff; }
.h7 { --bar: #2090ff; }
.h8 { --bar: #f0f; }

.freq-plot {
    flex: 1;
    min-height: 0;
    margin: 0 14px;
    border: 2px solid #2b2b2b;
}

.freq-bottom {
    display: flex;
    align-items: center;
    padding: 0 8px 0 14px;
    height: 25px;
    margin-top: 38px;
}

.freq-bottom select {
    width: 92px;
    margin: 0 17px 0 3px;
}

.freq-bottom #channel {
    flex: 1;
    margin: 0 15px 0 3px;
}

.freq-bottom .pill {
    width: 131px;
}

.advanced {
    justify-content: flex-start;
    gap: 18px;
    margin: 9px 13px 13px;
    color: #c0c0c0;
}

.advanced svg {
    width: 7px;
    height: 10px;
}

/* levels + selection */
.level-meter {
    height: 54px;
    margin: 0 7px;
    border: 1px solid #000;
    background: linear-gradient(90deg, #c8c800 0 2px, transparent 2px calc(100% - 13px), #000 calc(100% - 13px) calc(100% - 11px), transparent 0) #1c1c1c;
}

.level-scale {
    width: 100%;
    height: 25px;
}

.selview table {
    border-collapse: collapse;
    margin-left: 13px;
    width: 320px;
    table-layout: fixed;
}

.selview td, .selview th {
    height: 26px;
    padding: 0;
    text-align: left;
    font-weight: normal;
    line-height: 16px;
}

.selview tbody td {
    color: #2d8ceb;
    padding-left: 2px;
}

.selview thead td {
    width: 63px;
}

.selview thead th {
    width: 90px;
    height: 22px;
}

.lower .tabs {
    padding-left: 14px;
}

.selview .tabs {
    height: 35px;
}

/* status bar */
.statusbar {
    display: flex;
    align-items: stretch;
    height: 23px;
    margin-top: 3px;
    padding-right: 183px;
    background: #232323;
    line-height: 26px;
    white-space: nowrap;
}

.state {
    flex: 1;
    padding-left: 10px;
}

.cell {
    border-left: 1px solid #303030;
    padding-left: 11px;
    height: 17px;
    margin-top: 1px;
}

.s1 { width: 63px; }
.s2 { width: 131px; }
.s3 { width: 181px; }
.s4 { width: 80px; }
.s5 { width: 84px; padding-left: 21px; }
.s6 { width: 102px; border-right: 1px solid #303030; }

/* DeEsser window */
.dialog {
    position: absolute;
    left: 861px;
    top: 347px;
    width: 641px;
    background: #232323;
    box-shadow: 0 4px 14px rgba(0, 0, 0, 0.55);
}

.dlg-head {
    display: flex;
    justify-content: space-between;
    align-items: center;
    height: 37px;
    padding-left: 9px;
    background: #fff;
    color: #000;
}

.dlg-head h2 {
    font: 14px/37px "Open Sans", sans-serif;
}

.dlg-head button {
    width: 25px;
    height: 25px;
    margin: 4px 1px 0 0;
    background: #c75050;
    color: #fff;
    font-weight: bold;
}

.dlg-presets {
    display: flex;
    align-items: center;
    height: 57px;
    margin: 0 19px 0 18px;
    padding-top: 6px;
    border-bottom: 2px solid #2b2b2b;
}

.dlg-presets select {
    width: 256px;
    margin: 0 13px 0 4px;
}

.dlg-presets button {
    width: 28px;
    margin-right: 1px;
}

.dlg-presets .fav {
    width: 36px;
    margin-left: 3px;
    border-left: 1px solid #2e2e2e;
    justify-content: flex-end;
}

.dlg-presets .route {
    margin-left: auto;
}

.dlg-presets button:last-child {
    margin-right: -7px;
}

.dlg-presets .ic {
    width: 23px;
    height: 23px;
}

.dlg-plot {
    display: block;
    width: 568px;
    height: 299px;
    margin: 17px 25px 0;
    border: 2px solid #2b2b2b;
}

.dlg-controls {
    display: flex;
    height: 245px;
    margin: 0 19px;
    padding-top: 19px;
    border-bottom: 2px solid #2b2b2b;
}

.params {
    width: 394px;
}

.param {
    display: flex;
    align-items: center;
    height: 36px;
}

.param.mode {
    margin-bottom: 2px;
}

.p-label {
    width: 127px;
    text-align: right;
    margin-right: 15px;
}

.param .value {
    margin: 0 3px 0 5px;
    color: #2d8ceb;
}

.param .slider + .value {
    margin-left: 36px;
}

.radio, .check {
    display: flex;
    align-items: center;
    gap: 4px;
}

.radio.first {
    margin: 0 13px 0 41px;
}

.radio input {
    appearance: none;
    width: 17px;
    height: 17px;
    margin: 0;
    border: 3px solid #8f8f8f;
    border-radius: 50%;
}

.radio input:checked {
    background: #8f8f8f;
}

.check {
    margin: 3px 0 0 126px;
}

.check input {
    appearance: none;
    width: 18px;
    height: 18px;
    margin: 0;
    border: 2px solid #8f8f8f;
    border-radius: 2px;
}

.slider {
    position: relative;
    width: 178px;
    height: 36px;
}

.slider svg {
    display: block;
    width: 178px;
    height: 36px;
    overflow: visible;
}

.slider input {
    position: absolute;
    left: 0;
    bottom: 6px;
    width: 178px;
    height: 16px;
    margin: 0;
    appearance: none;
    background: linear-gradient(#555, #555) no-repeat 0 7px / calc(100% - 17px) 2px;
}

.slider input::-webkit-slider-thumb {
    appearance: none;
    width: 15px;
    height: 15px;
    border: 2px solid #9a9a9a;
    border-radius: 50%;
    background: #232323;
}

.gain {
    display: flex;
    flex-direction: column;
    padding-top: 10px;
}

.gain svg {
    width: 60px;
    height: 150px;
    margin: 20px 0 0 70px;
}

.dlg-foot {
    padding: 15px 18px 17px 19px;
}

.dlg-btns {
    display: flex;
    align-items: center;
    margin-top: 8px;
}

.dlg-btns .pw {
    width: 22px;
    height: 23px;
    background: #329a6c;
    color: #8fd0b0;
}

.dlg-btns .pw .ic {
    width: 18px;
    height: 18px;
}

.dlg-btns .pl {
    margin: 0 14px 0 18px;
}

.dlg-btns .lp {
    width: 33px;
    height: 24px;
    border: 1px solid #2e2e2e;
    background: #161616;
    color: #2d8ceb;
    margin-right: auto;
}

.dlg-btns .pill {
    width: 100px;
    margin-left: 12px;
}
```
FILE: script.js
```js
const NS = "http://www.w3.org/2000/svg";

function node(parent, tag, attrs, text) {
    const el = document.createElementNS(NS, tag);
    for (const key in attrs) el.setAttribute(key, attrs[key]);
    if (text !== undefined) el.textContent = text;
    parent.appendChild(el);
    return el;
}

function line(svg, x1, y1, x2, y2, stroke, width = 1) {
    return node(svg, "line", { x1, y1, x2, y2, stroke, "stroke-width": width });
}

function label(svg, x, y, text, anchor = "middle", fill = "#8f8f8f", size = 13) {
    return node(svg, "text", { x, y, fill, "text-anchor": anchor, "font-size": size }, text);
}

function rect(svg, x, y, width, height, fill) {
    return node(svg, "rect", { x, y, width, height, fill });
}

function size(svg) {
    return [svg.clientWidth, svg.clientHeight];
}

// repeatable pseudo random value in 0..1
function hash(a, b) {
    let n = Math.imul(a | 0, 374761393) + Math.imul(b | 0, 668265263);
    n = Math.imul(n ^ (n >>> 13), 1274126177);
    return ((n ^ (n >>> 16)) >>> 0) / 4294967296;
}

// linear interpolation in a flat [x, v, x, v ...] list
function lerpList(list, x) {
    if (x <= list[0]) return list[1];
    for (let i = 2; i < list.length; i += 2) {
        if (x <= list[i]) {
            const t = (x - list[i - 2]) / (list[i] - list[i - 2]);
            return list[i - 1] + (list[i + 1] - list[i - 1]) * t;
        }
    }
    return list[list.length - 1];
}

/* effects rack slots */
const slots = document.getElementById("slots");
for (let i = 1; i <= 10; i++) {
    slots.insertAdjacentHTML("beforeend",
        `<li><span class="n">${i}</span><button type="button" class="pw" aria-label="Power ${i}"><svg class="ic"><use href="#i-power"/></svg></button>` +
        `<button type="button" class="go" aria-label="Slot ${i} menu"><svg viewBox="0 0 7 11"><path d="M0 0l7 5.500L0 11z" fill="currentColor"/></svg></button></li>`);
}

/* time axis: 1271 units cover the visible range */
const VIEW = 1271;
const gridX = [46, 200, 353, 506, 659, 812, 965, 1118];

/* overview */
{
    const svg = document.getElementById("overview");
    const [w, h] = size(svg);
    const k = w / VIEW;
    const mid = 17.5;
    rect(svg, 149 * k, -1, 104 * k, h + 2, "#2c2c2c");
    const bursts = [[126, 141, 4.5], [149, 164, 2], [165, 169, 1], [170, 178, 3], [201, 222, 4.5], [222, 236, 3], [236, 246, 1.5], [252, 256, 4], [256, 272, 1.5],
        [288, 304, 2.5], [304, 314, 1], [380, 384, 3], [384, 404, 1.5], [406, 440, 4], [449, 460, 3.5], [463, 482, 3], [511, 533, 3], [540, 572, 3.2],
        [577, 596, 2], [611, 624, 2], [626, 636, 6], [636, 644, 3], [644, 659, 5.5], [693, 720, 7], [720, 746, 5], [756, 768, 2], [779, 794, 5],
        [803, 813, 1.5], [826, 861, 3.5], [861, 882, 5], [898, 911, 1.5], [923, 946, 3], [946, 976, 1], [1005, 1036, 3], [1036, 1052, 1.5],
        [1055, 1064, 1.5], [1081, 1096, 4], [1111, 1133, 3], [1141, 1146, 1.5], [1161, 1181, 1.7], [1181, 1195, 1], [1204, 1212, 1]];
    line(svg, 0, mid, w, mid, "#7fe8b4", 1);
    for (const [a, b, amp] of bursts) {
        const top = [];
        const bot = [];
        for (let x = a; x <= b; x += 1.5) {
            const env = Math.min(1, (x - a + 2) / 5, (b - x + 2) / 5);
            const r = amp * env * (0.75 + 0.5 * hash(Math.round(x * 3), 3)) + 0.4;
            top.push(`${x * k},${mid - r}`);
            bot.unshift(`${x * k},${mid + r}`);
        }
        node(svg, "polygon", { points: top.concat(bot).join(" "), fill: "#50eeb0" });
    }
    rect(svg, 180 * k, 1, 13 * k, h - 2, "#fff");
    line(svg, 180 * k, mid, 193 * k, mid, "#8f8f8f");
    line(svg, 188 * k, 1, 188 * k, h - 1, "#c03030", 1.5);
    node(svg, "path", { d: `M${149 * k} -0.500H${252 * k}M${149 * k} ${h + 0.5}H${252 * k}`, stroke: "#8f8f8f", "stroke-width": 1.5 });
    for (const x of [149, 250]) {
        node(svg, "rect", { x: x * k - 3, y: 2, width: 6, height: h - 4, rx: 3, fill: "#2c2c2c", stroke: "#7a7a7a", "stroke-width": 2 });
    }
}

/* time ruler */
{
    const svg = document.getElementById("ruler");
    const w = svg.clientWidth;
    const k = w / VIEW;
    rect(svg, 0, 0, w, 33, "#202020");
    line(svg, 0, 1, w, 1, "#0c0c0c", 2);
    rect(svg, 410 * k, 2, 158 * k, 31, "#29443c");
    label(svg, 3, 18, "hms", "start");
    gridX.forEach((x, i) => {
        label(svg, x * k + 1, 18, (1.3 + i / 10).toFixed(1));
        line(svg, x * k, 24, x * k, 33, "#a0a0a0", 1.5);
        line(svg, (x + 77) * k, 27, (x + 77) * k, 33, "#8f8f8f");
    });
    label(svg, w - 8, 18, "2.1", "start");
    for (let i = 0; i < 4; i++) line(svg, (485 + i * 3) * k, 21, (485 + i * 3) * k, 28, "#8f8f8f");
    for (const [x, d] of [[411, -1], [569, 1]]) {
        node(svg, "path", { d: `M${x * k} 2V13l${d * 4} 4l${-d * 4} 4V33`, fill: "none", stroke: "#a8a8a8", "stroke-width": 2 });
    }
    node(svg, "path", { d: `M${508 * k} 17h14v9l-7 7l-7 -7z`, fill: "#2d8ceb" });
    node(svg, "path", { d: `M${546 * k} 17h14v9l-7 7l-7 -7z`, fill: "#27679f" });
}

/* waveform */
{
    const svg = document.getElementById("wave");
    const [w, h] = size(svg);
    const k = w / VIEW;
    const mid = h / 2;
    for (const dy of [-72, -50, -25, 25, 50, 71]) line(svg, 0, mid + dy * h / 202, w, mid + dy * h / 202, "#12351c");
    for (const x of gridX) line(svg, x * k, 0, x * k, h, "#12351c", 1.5);
    line(svg, 0, mid, w, mid, "#6a1c1c");
    // pulse, hiss and ripple amplitude along the view
    const pulse = [0, 20, 60, 15, 120, 9, 150, 3, 180, 1, 290, 0, 296, 15, 305, 24, 345, 22, 360, 8, 366, 0, 660, 0, 668, 12, 690, 24, 720, 27, 760, 31, 860, 29,
        960, 21, 1020, 13, 1060, 3, 1100, 0, 1200, 0, 1206, 14, 1240, 22, 1271, 25];
    const hiss = [0, 5, 60, 3, 140, 1, 210, 1, 225, 3, 250, 1, 290, 1, 300, 4, 350, 4, 375, 4, 430, 5, 460, 7, 500, 9, 515, 8, 517, 4, 560, 3, 600, 1, 620, 4, 640, 4, 660, 2, 690, 6, 850, 7, 960, 4, 1020, 1, 1190, 0, 1205, 5, 1271, 5];
    const ripple = [0, 14, 60, 12, 120, 10, 165, 4, 200, 1, 280, 0, 300, 4, 355, 5, 370, 0, 660, 0, 690, 6, 860, 8, 960, 8, 1040, 8, 1110, 5, 1180, 2, 1200, 1, 1215, 4, 1271, 5];
    let d = "";
    for (let x = 0; x <= VIEW; x += 0.5) {
        const ph = (x % 10.8) / 10.8;
        const jitter = 0.8 + 0.4 * hash(Math.floor(x / 10.8), 31);
        let y = lerpList(pulse, x) * jitter * (Math.exp(-ph * 20) - 0.75 * Math.exp(-Math.pow((ph - 0.2) * 13, 2)));
        y += lerpList(ripple, x) * 0.7 * Math.sin((x / 10.8) * Math.PI * 2 + 2.2 + Math.sin(x / 4));
        y += lerpList(hiss, x) * (hash(Math.round(x * 2), 9) * 2 - 1);
        d += (d ? "L" : "M") + (x * k).toFixed(1) + " " + (mid - y).toFixed(1);
    }
    node(svg, "path", { d, fill: "none", stroke: "#50dfa4", "stroke-width": 1.2, "stroke-linejoin": "bevel" });
    line(svg, 515 * k, 0, 515 * k, h, "#a02020", 1.5);
    line(svg, 553 * k, 0, 553 * k, h, "#8a1c1c", 1.5).setAttribute("stroke-dasharray", "3 4");
}

/* amplitude scale */
{
    const svg = document.getElementById("db-scale");
    const mid = svg.clientHeight / 2;
    const marks = [[-90, "dB"], [-72, "-3"], [-50, "-6"], [-25, "-12"], [0, "-∞"], [25, "-12"], [50, "-6"], [71, "-3"]];
    for (const [dy, text] of marks) {
        label(svg, 10, mid + dy + 4, text, "start");
        line(svg, 0, mid + dy, 6, mid + dy, "#8f8f8f");
    }
    for (const dy of [80, 65, 60, 56, 44, 39, 35, 32, 29]) {
        line(svg, 0, mid + dy, 3, mid + dy, "#8f8f8f");
        line(svg, 0, mid - dy, 3, mid - dy, "#8f8f8f");
    }
}

/* frequency scale */
{
    const svg = document.getElementById("hz-scale");
    const k = svg.clientHeight / 805;
    const marks = [[10, "Hz"], [43, "16k"], [59, "14k"], [79, "12k"], [103, "10k"], [131, "8k"], [149, "7k"], [169, "6k"], [193, "5k"], [221, "4k"], [259, "3k"], [311, "2k"],
        [400, "1k"], [429, "800"], [446, "700"], [466, "600"], [490, "500"], [519, "400"], [556, "300"], [609, "200"], [698, "100"], [726, "80"], [764, "60"]];
    for (const [y, text] of marks) {
        const bright = ["Hz", "10k", "1k", "100"].includes(text);
        label(svg, 11, y * k + 5, text, "start", bright ? "#a0a0a0" : "#505050");
        line(svg, 0, y * k, bright ? 6 : 4, y * k, "#8f8f8f", bright ? 2 : 1);
    }
}

/* spectrogram */
{
    const canvas = document.getElementById("spectral");
    const W = canvas.width = canvas.clientWidth;
    const H = canvas.height = canvas.clientHeight;
    const ctx = canvas.getContext("2d");
    const ramp = [[0, 0, 0], [14, 8, 26], [40, 8, 74], [92, 18, 104], [156, 0, 88], [208, 0, 24], [255, 48, 0], [255, 116, 28], [255, 184, 80], [255, 228, 92]];

    // energy (0-9) at columns xs for every row y
    const xs = [0, 46, 76, 116, 156, 200, 212, 224, 237, 500, 878, 926, 965, 1006, 1031, 1056, 1118, 1156, 1176, 1188, 1201, 1216, 1236, 1271];
    const rows = [
        [0, [0, 0, 0, 0, 0, 0, 0, 0.3, 0.8, 1, 0.2, 0.2, 0.2, 0.2, 0.2, 0.2, 0.2, 0.2, 0.2, 0.2, 0.3, 0.3, 0.3, 0.3]],
        [45, [0.7, 0.6, 0.4, 0.4, 0.4, 0.4, 0.6, 1.5, 2.4, 2, 0.7, 0.7, 0.7, 0.7, 0.7, 0.7, 0.7, 0.5, 0.4, 0.5, 0.9, 1, 1.1, 1]],
        [75, [1.6, 1.4, 0.9, 0.9, 0.9, 0.9, 1, 2.7, 3.6, 3, 0.9, 0.9, 1, 2.3, 1.8, 1, 1.2, 0.7, 0.5, 1.6, 2.2, 2.6, 3.1, 2.6]],
        [125, [1.9, 1.9, 1.3, 1.6, 1.4, 1.3, 1.3, 2.7, 3.7, 3, 1.1, 1.2, 1.6, 1.9, 1.9, 0.9, 1.6, 0.9, 0.6, 1, 1.9, 2.5, 2.8, 2.4]],
        [160, [1.5, 1.6, 1.3, 1.3, 1.2, 1.1, 1.1, 2.7, 3.8, 3, 1.6, 1.8, 2.1, 2.4, 2.4, 1.4, 1.3, 0.9, 0.6, 1, 1.5, 2.3, 2.4, 2.4]],
        [195, [0.8, 0.8, 0.8, 0.8, 0.7, 0.7, 1.2, 3.5, 4.2, 3, 0.8, 0.8, 0.9, 1.2, 1.2, 0.8, 0.9, 0.7, 0.7, 1.8, 3, 1.4, 1.6, 1.4]],
        [213, [2.1, 2.2, 2.1, 1.8, 1.5, 1.2, 1.8, 4, 4.4, 4, 1.2, 1.3, 1.6, 2.4, 2.2, 1.2, 1, 0.8, 0.8, 2.5, 3.9, 1.8, 2.2, 2]],
        [226, [4.4, 4.6, 3.8, 3.5, 2.3, 2, 2.4, 4.6, 4.6, 4, 2.8, 3, 3.2, 3.2, 3, 2, 1.6, 1.3, 1.1, 3, 3.9, 4.4, 4.8, 4.8]],
        [242, [5.3, 5.8, 4.9, 4.4, 3, 2.3, 2.8, 5.6, 5, 5, 5.8, 5.8, 5.8, 5.8, 4.2, 3, 2.3, 1.6, 1.2, 3.4, 4, 5, 5.2, 5.2]],
        [262, [5, 4.9, 3.9, 4, 3, 2.3, 3, 5.6, 4.8, 5, 4, 4.1, 4.8, 5.1, 4.6, 3.2, 2.5, 1.8, 1.5, 3.6, 4, 5, 5.2, 5.2]],
        [280, [5.8, 5.9, 4.1, 3.9, 3.6, 2.8, 3, 5.2, 4.8, 5, 3.3, 3.4, 4.6, 5.4, 5.1, 3.5, 2.6, 2, 1.6, 3.8, 4.4, 5.2, 5.7, 5.3]],
        [310, [4.6, 4.7, 4.2, 4.3, 3.5, 2.2, 3.1, 5.2, 4.6, 5, 3.3, 3.5, 4.3, 4.5, 4.4, 3.4, 3.3, 2.3, 1.9, 4, 4.6, 5, 5.2, 5.2]],
        [350, [4.9, 4.8, 4.4, 4.2, 3.3, 2.3, 3, 5.1, 4.6, 5, 4.6, 4.5, 4.6, 5, 4.8, 3.7, 3.3, 2.8, 2.3, 4, 4.8, 5.3, 5.3, 5.3]],
        [363, [6.3, 5.9, 4.8, 4.6, 3.4, 2.6, 3, 5.1, 4.6, 5, 4.8, 4.8, 5, 4.8, 4.6, 4.3, 3.7, 3, 2.2, 3.4, 4.6, 5.2, 5.3, 5.3]],
        [382, [7.7, 7.9, 7, 6.5, 5.4, 3.2, 3.2, 5.1, 4.6, 5, 6.1, 6.1, 5.8, 5, 4.4, 4.4, 3.8, 2.9, 2, 2.3, 4.3, 5.1, 5.4, 5.2]],
        [402, [6, 6, 5.6, 5, 4.6, 3.2, 3.2, 5.1, 4.6, 5, 7, 6.9, 6.6, 5.2, 4.5, 4.5, 3.8, 3.2, 2.2, 3, 4.2, 5, 5.5, 5.4]],
        [418, [6.7, 6.8, 5.4, 5, 4.4, 3.1, 3.2, 5, 4.6, 5, 8, 7.8, 7, 6, 5.4, 5.2, 4, 3.3, 2.6, 3.4, 4.2, 5.3, 5.7, 5.6]],
        [440, [7.8, 8, 6.2, 5.8, 5, 3.6, 3.6, 5.3, 4.8, 5, 8.3, 8.1, 7.4, 6.6, 6.2, 6, 4, 3.4, 3.8, 3.9, 4.8, 6, 6.6, 6.5]],
        [462, [8.6, 8.6, 7, 6.6, 6, 4.4, 4.4, 5.6, 5, 5, 8.8, 8.5, 8, 7.6, 7, 6.2, 4.8, 4, 4.2, 4.6, 6, 8.6, 8.8, 8.7]],
        [485, [8, 8.3, 7.4, 6.8, 6.6, 5, 4.8, 5.6, 5.2, 5, 8.7, 8.4, 8, 7.9, 7.6, 7.4, 6.2, 5, 4.9, 5.3, 6.6, 8.6, 8.7, 8.7]],
        [510, [8.5, 8.5, 8.2, 8.1, 7.9, 5.6, 5.2, 5.6, 5.4, 5, 8.4, 8.3, 8, 8, 7.8, 7.6, 7.2, 6.2, 5.6, 5.6, 6.8, 8.6, 8.7, 8.6]],
        [545, [8.2, 7.8, 8, 8, 8.2, 5.8, 5.3, 5.8, 5, 5, 8.5, 8.4, 8.2, 8.2, 8.1, 8.1, 7.6, 7.3, 6.4, 6, 6.9, 8.4, 8.3, 8.3]],
        [560, [8.6, 8, 8.3, 8, 8.1, 6, 4.5, 5, 5, 5, 8.5, 8.3, 8.2, 8.3, 8.3, 8.2, 8, 7.8, 7.2, 6.2, 7, 8.4, 8.3, 8.3]],
        [590, [9, 9, 8.8, 8.8, 8.6, 5, 4.8, 6, 5.5, 6, 8.7, 8.7, 8.6, 8.5, 8.5, 8.5, 8.2, 8, 7.6, 6.7, 7.2, 8.3, 8.4, 8.4]],
        [615, [8.9, 9, 9, 9, 8.7, 6.3, 6, 7, 6.5, 8, 8.8, 8.8, 8.8, 8.8, 8.8, 8.6, 8.4, 8, 7.6, 7.1, 7.5, 8.4, 8.4, 8.4]]
    ];
    const columns = rows.map(([y, v]) => {
        const flat = xs.flatMap((x, i) => [x, v[i]]);
        return { y, line: Array.from({ length: VIEW + 1 }, (_, x) => lerpList(flat, x)) };
    });
    // the three lowest FFT bins
    const bins = {
        3: [0, 8.2, 16, 8.1, 76, 8.7, 136, 9, 166, 9, 191, 7.7, 216, 6.8, 226, 5.8, 246, 7, 261, 6.3, 271, 5.4, 281, 6, 288, 8, 306, 8.7, 376, 8.7, 388, 8, 396, 5.8, 406, 6, 456, 5.6, 476, 4.5, 496, 4,
            526, 4, 566, 4.5, 576, 6.2, 591, 5.5, 606, 4, 616, 5, 623, 3.3, 636, 4.5, 646, 6.8, 661, 7.5, 676, 8.7, 876, 8.8, 976, 9, 1076, 9, 1116, 8.6, 1146, 8.3, 1176, 8, 1188, 7.3, 1201, 7.8, 1216, 8.7, 1271, 8.7],
        2: [0, 5.6, 16, 6.3, 26, 6, 56, 5.9, 76, 6.5, 116, 7.2, 156, 7.5, 176, 7.3, 201, 7, 216, 5.5, 231, 5.2, 246, 6, 256, 6, 266, 5, 276, 5.2, 286, 6.5, 296, 8, 336, 8.2, 366, 8.3, 381, 8, 391, 6, 396, 4,
            401, 5.4, 426, 5.3, 456, 5, 476, 3.8, 486, 3, 496, 3.8, 526, 3.6, 551, 3.4, 558, 2.8, 566, 4.5, 581, 5.3, 591, 4.4, 601, 3, 616, 4, 626, 3.2, 631, 4.5, 646, 5.5, 661, 5.8, 671, 7.9, 776, 8.1, 976, 8.3, 1076, 8.3,
            1096, 8, 1116, 7.9, 1156, 7.8, 1186, 7.4, 1192, 7.2, 1206, 7.8, 1216, 8.1, 1271, 8.1],
        1: [0, 4, 16, 3.6, 22, 2, 31, 3, 41, 2.3, 50, 2.8, 56, 1.8, 66, 4, 76, 3, 86, 4.2, 94, 3, 101, 4.5, 116, 4, 131, 5, 141, 4.7, 156, 5.5, 171, 5.5, 181, 6.2, 206, 6.2, 216, 5.5, 224, 3.5, 236, 4.3, 244, 3.6, 256, 5,
            264, 4.5, 269, 2.5, 276, 4.2, 286, 5, 296, 6.5, 311, 6.3, 336, 6.7, 366, 7, 381, 6.5, 391, 5, 406, 4.7, 426, 4.2, 446, 4, 461, 3, 476, 2.3, 486, 2, 496, 2.6, 516, 2.3, 541, 2.3, 551, 2.5, 566, 4, 576, 4.6,
            591, 4, 596, 3, 606, 2.7, 616, 3, 626, 2.7, 635, 2.2, 641, 4, 656, 5, 671, 6, 741, 6.1, 758, 6.3, 796, 6, 876, 6.1, 906, 6.3, 966, 6.7, 1016, 6.7, 1050, 7, 1096, 6.8, 1116, 6.7, 1156, 6.5, 1191, 6, 1206, 6.2, 1211, 6.8, 1271, 6.8]
    };
    const strip = {};
    for (const n in bins) strip[n] = Array.from({ length: VIEW + 1 }, (_, x) => lerpList(bins[n], x));
    // formant sweeps: x, y pairs, strength, thickness
    const sweeps = [
        { p: [860, 412, 930, 408, 960, 396, 990, 366, 1015, 345, 1042, 330, 1060, 326], v: 7.5, t: 10 },
        { p: [1206, 334, 1225, 331, 1290, 333], v: 7.6, t: 7 },
        { p: [1180, 345, 1290, 345], v: 7, t: 4 },
        { p: [870, 238, 1000, 234, 1060, 236], v: 6, t: 4 },
        { p: [926, 262, 1000, 270, 1040, 282], v: 6, t: 4 }
    ];
    // rows of dark gaps between harmonics: FFT bin, from, to, period, depth
    const gaps = [[20, 878, 1040, 11, 1.5], [22, 878, 1000, 11, 1.8], [18, 878, 1050, 11, 2], [15, 878, 1085, 11, 2.4], [14, 878, 1110, 11, 1.6], [12, 878, 980, 11, 1.6], [11, 940, 1120, 11, 2], [9, 878, 1120, 11, 3.2], [7, 878, 1090, 11, 3], [5, 878, 1060, 11.3, 3.6], [4, 1070, 1200, 13, 3.2],
        [9, 1205, 1271, 12, 3], [12, 1205, 1271, 12, 2], [18, 1205, 1271, 12, 2], [5, 1130, 1271, 12, 1.2], [11, 10, 150, 8, 2.6], [10, 60, 170, 9, 1.6], [7, 0, 60, 8, 2], [6, 60, 170, 9, 2.6], [16, 0, 90, 8, 2.4], [17, 0, 60, 8, 2]];

    const img = ctx.createImageData(W, H);
    for (let py = 0; py < H; py++) {
        const y = py * 805 / H;
        const hz = Math.pow(10, 2 + (698.5 - y) / 298.5);
        const bin = Math.floor(hz / 43.07);
        const yb = bin > 3 ? 698.5 - 298.5 * Math.log10((bin + 0.5) * 43.07 / 100) : y;
        let r = 0;
        while (r < columns.length - 2 && columns[r + 1].y < yb) r++;
        const a = columns[r];
        const b = columns[r + 1];
        const t = Math.min(1, Math.max(0, (yb - a.y) / (b.y - a.y)));
        const rowGaps = gaps.filter(g => g[0] === bin);
        const streak = bin > 45 ? 17 : 8;
        for (let px = 0; px < W; px++) {
            const x = px * VIEW / W;
            const xi = x | 0;
            let v;
            if (bin <= 3) {
                v = strip[Math.max(1, bin)][xi];
                v += (hash(xi >> 2, bin) - 0.5) * 0.15;
            } else {
                v = a.line[xi] * (1 - t) + b.line[xi] * t;
                for (const sw of sweeps) {
                    if (x >= sw.p[0] && x <= sw.p[sw.p.length - 2]) {
                        const fade = Math.min(1, (x - sw.p[0]) / 30, (sw.p[sw.p.length - 2] - x) / 25);
                        const dy = (yb - lerpList(sw.p, x)) / sw.t;
                        v += Math.max(0, sw.v - v) * Math.exp(-dy * dy) * fade;
                    }
                }
                // noise that smears along time inside each bin
                const cell = x / streak + bin * 0.37;
                const c = Math.floor(cell);
                const f = cell - c;
                const s = f * f * (3 - 2 * f);
                const n = hash(c, bin) * (1 - s) + hash(c + 1, bin) * s - 0.5;
                const wide = x / 60;
                const wc = Math.floor(wide);
                const wf = wide - wc;
                const broad = hash(wc, bin >> 1) * (1 - wf) + hash(wc + 1, bin >> 1) * wf - 0.5;
                const amt = v > 7.5 ? 0.15 : v > 5.6 ? 0.6 : v > 2.2 ? 1.3 : 1.1;
                v += n * amt + broad * amt * 0.6;
                if (bin > 14 && bin < 110 && v > 2.5 && v < 5.2 && (x + bin * 5) % 15 < 3 && hash(xi / 15, bin) > 0.72) v -= 1.2;
                for (const g of rowGaps) {
                    if (x > g[1] && x < g[2]) {
                        const ph = (((x - g[1]) % g[3]) / g[3] - 0.5) * 4;
                        const edge = Math.min(1, (g[2] - x) / 60 + 0.3);
                        v -= g[4] * edge * Math.exp(-ph * ph * 2.5) * (0.5 + 0.5 * hash(Math.floor((x - g[1]) / g[3]), bin));
                    }
                }
            }
            v = Math.max(0, Math.min(8.99, v));
            const i = v | 0;
            const q = v - i;
            const o = (py * W + px) * 4;
            for (let ch = 0; ch < 3; ch++) img.data[o + ch] = ramp[i][ch] * (1 - q) + ramp[i + 1][ch] * q;
            img.data[o + 3] = 255;
        }
    }
    ctx.putImageData(img, 0, 0);

    // grid over the spectrum
    ctx.fillStyle = "rgba(200, 200, 200, 0.6)";
    const thin = [15, 27, 60, 80, 117, 150, 170, 222, 260, 311, 326, 355, 371, 391, 401, 415, 461, 467, 481, 496, 520, 556, 571, 610, 712, 742, 765, 802];
    const thick = [43, 104, 132, 193, 339, 429, 445, 534, 624, 698, 727, 759, 779];
    for (const y of thin) ctx.fillRect(0, y * H / 805 | 0, W, 1);
    for (const y of thick) ctx.fillRect(0, y * H / 805 | 0, W, 2);
    gridX.forEach((x, i) => ctx.fillRect(x * W / VIEW | 0, 0, i === 2 || i === 7 ? 2 : 1, H));
    ctx.fillStyle = "#e8c8d8";
    ctx.fillRect(515 * W / VIEW | 0, 0, 1, H);
    for (let y = 2; y < H; y += 7) ctx.fillRect(552 * W / VIEW | 0, y, 2, 2);
}

/* rack meter scale */
{
    const svg = document.getElementById("io-scale");
    for (let i = 0; i <= 60; i++) {
        const x = 7 + i * 6.6;
        line(svg, x, 0, x, i % 6 === 0 ? 5 : 2, "#8f8f8f", i % 6 === 0 ? 1.5 : 1);
    }
    label(svg, 12, 19, "dB", "middle", "#8f8f8f", 11);
    for (let i = 1; i <= 10; i++) label(svg, 8 + i * 39.6, 19, String(i * 6 - 60), "middle", "#8f8f8f", 11);
}

/* level meter scale */
{
    const svg = document.getElementById("level-scale");
    const k = (svg.clientWidth - 31) / 60;
    for (let i = 0; i <= 60; i++) {
        const x = 9 + i * k;
        line(svg, x, 0, x, i % 3 === 0 ? 5 : 2, "#8f8f8f", i % 3 === 0 ? 1.5 : 1);
        if (i % 3 === 0 && i) label(svg, x + 1, 19, String(i - 60), "middle", "#8f8f8f", 11);
    }
    label(svg, 6, 19, "dB", "start", "#8f8f8f", 11);
}

/* frequency analysis plot */
{
    const svg = document.getElementById("freq-plot");
    const [w, h] = size(svg);
    const pw = w - 52;
    const ph = h - 31;
    const kx = (pw - 4) / 468;
    const X = khz => 9 + khz * 20.9 * kx;
    const Y = db => 62 - db * (ph - 65) / 100;
    rect(svg, 4, 3, pw, ph, "#000");
    for (let f = 0; f <= 20; f += 5) line(svg, X(f), 5, X(f), ph + 2, "#0c300c", 1.5);
    for (let db = 5; db >= -100; db -= 5) line(svg, 5, Y(db), pw + 4, Y(db), "#0c300c", 1.5);
    label(svg, 11, 22, "Live CTI", "start", "#444");
    line(svg, pw + 5, 3, pw + 5, ph + 3, "#8f8f8f");
    line(svg, 4, ph + 4, pw + 5, ph + 4, "#8f8f8f");
    for (let db = 6; db >= -100; db -= 1) line(svg, pw + 5, Y(db), pw + (db % 5 === 0 ? 13 : 9), Y(db), "#8f8f8f", 1);
    label(svg, pw + 19, 12, "dB", "start");
    for (let db = 0; db >= -100; db -= 5) label(svg, pw + 19, Y(db) + 5, String(db), "start");
    for (let f = 0; f <= 22; f++) line(svg, X(f), ph + 4, X(f), ph + (f % 5 === 0 ? 14 : 9), "#8f8f8f", f % 5 === 0 ? 1.5 : 1);
    label(svg, X(0), ph + 26, "Hz");
    for (const f of [5, 10, 15, 20]) label(svg, X(f) + 1, ph + 26, f + "k");

    // upper envelope; arches of random depth hang below it
    const curve = [0.1, -95, 0.2, -64, 0.3, -63, 0.45, -64, 0.6, -66, 0.8, -64, 0.95, -61, 1.1, -64, 1.5, -65, 1.7, -61, 2.1, -59, 2.3, -56, 2.7, -54, 2.9, -53, 3.1, -51, 3.3, -50,
        3.45, -42, 3.55, -35, 3.7, -35, 3.8, -40, 3.95, -42, 4.1, -48, 4.25, -53, 4.4, -60, 4.6, -56, 4.8, -51, 5, -52, 5.15, -53, 5.3, -46, 5.45, -48, 5.6, -54, 5.8, -54, 6, -57, 6.5, -57, 7.1, -59, 7.4, -61,
        7.7, -56, 8, -59, 8.3, -60, 8.7, -59, 9.1, -60, 9.5, -58, 10, -58, 10.5, -58, 11, -56, 11.5, -54, 11.7, -51, 12, -55, 12.6, -58, 13, -56, 13.4, -59, 13.8, -61, 14.2, -67, 14.6, -74, 15, -79, 15.5, -83, 16, -86, 16.4, -88,
        16.8, -86, 17.2, -87, 17.6, -86, 18, -90, 18.4, -90, 18.8, -92, 19.2, -95, 19.4, -100];
    let d = "";
    for (let f = 0.1; f <= 19.4; f += 0.04) {
        const arch = f / 0.29;
        const n = Math.floor(arch + 0.5);
        const depth = f < 0.4 ? 0 : f > 3.2 && f < 4 ? 3 : f > 14.5 ? 6 + 12 * hash(n, 5) : 5 + 13 * Math.pow(hash(n, 5), 2);
        const rough = f < 0.4 ? 0 : 3;
        const db = Math.max(-100, lerpList(curve, f) - depth * Math.pow(Math.abs(Math.cos(arch * Math.PI)), 5) - hash(Math.round(f * 50), 77) * rough);
        d += (d ? "L" : "M") + X(f).toFixed(1) + " " + Y(db).toFixed(1);
    }
    node(svg, "path", { d, fill: "none", stroke: "#4fdca4", "stroke-width": 1.5, "stroke-linejoin": "bevel" });
    const red = [3.1, -100, 3.15, -90, 3.2, -75, 3.3, -62, 3.4, -52, 3.55, -41, 3.65, -38, 3.75, -42, 3.85, -44, 3.95, -50, 4.1, -56, 4.2, -70, 4.3, -82, 4.35, -94];
    let rd = "";
    for (let i = 0; i < red.length; i += 2) rd += (rd ? "L" : "M") + X(red[i]) + " " + Y(red[i + 1]);
    node(svg, "path", { d: rd, fill: "none", stroke: "#d81e1e", "stroke-width": 1.5 });
}

/* DeEsser plot */
{
    const svg = document.getElementById("dlg-plot");
    const X = hz => 9 + Math.log10(hz / 20) * 166.7;
    const Y = db => 10 - db * 2.08;
    rect(svg, 4, 4, 511, 260, "#000");
    rect(svg, 9, 10, 339, 250, "#55665a");
    rect(svg, 414, 10, 95, 250, "#55665a");
    for (let db = 0; db >= -120; db -= 2) line(svg, 5, Y(db), 515, Y(db), db % 10 ? "rgba(150,165,150,0.2)" : "rgba(165,180,165,0.38)", db % 10 ? 1 : 1.5);
    for (let dec = 10; dec <= 10000; dec *= 10) {
        for (let m = 1; m < 10; m++) {
            const hz = dec * m;
            if (hz < 20 || hz > 20000) continue;
            const x = X(hz);
            line(svg, x, 5, x, 262, m === 1 ? "rgba(165,180,165,0.5)" : "rgba(150,165,150,0.24)", m === 1 ? 2 : 1.5);
            line(svg, x, 266, x, m === 1 || hz === 20 || hz === 20000 ? 275 : 271, "#8f8f8f", 1.5);
        }
    }
    const pts = "361,260 369,252 373,242 375,230 376.5,127 378,123 380,125 381,110 382.5,108 384,94 386,107 388,115 390.5,105 393,123 395,128 396.5,213 400,228 406,242 413,250 423,260";
    node(svg, "polygon", { points: pts, fill: "#259066", "fill-opacity": 0.85, stroke: "#46d79b", "stroke-width": 1.2 });
    line(svg, 348.5, 10, 348.5, 260, "#dedede", 2);
    line(svg, 413.5, 10, 413.5, 260, "#dedede", 2);
    line(svg, 4, 265, 516, 265, "#777");
    line(svg, 516, 4, 516, 265, "#777");
    for (let db = 0; db >= -120; db -= 2) line(svg, 516, Y(db), db % 10 ? 521 : 525, Y(db), "#9a9a9a", 1.5);
    label(svg, 531, 14, "dB", "start");
    for (let db = -10; db >= -120; db -= 10) label(svg, 531, Y(db) + 5, String(db), "start");
    const marks = [[20, "Hz", 1], [30, "30"], [40, "40"], [60, "60"], [100, "100", 1], [200, "200"], [300, "300"], [500, "500"], [1000, "1k", 1], [2000, "2k"], [3000, "3k"], [4000, "4k"], [6000, "6k"], [10000, "10k", 1], [19000, "20k", 1]];
    for (const [hz, text, bright] of marks) label(svg, X(hz) + 1, 291, text, "middle", bright ? "#9a9a9a" : "#505050");
}

/* threshold ticks */
{
    const svg = document.getElementById("slider-scale");
    for (let i = 0; i <= 8; i++) {
        const x = 1 + i * 21;
        if (i < 8) line(svg, x, i % 2 ? 19 : 15, x, 22, "#777", 1.5);
        if (i % 2 === 0) label(svg, x, 12, String(i * 10 - 80), "middle", "#8f8f8f", 11);
    }
}

/* gain reduction meter */
{
    const svg = document.getElementById("gain-meter");
    rect(svg, 2, 3, 17, 140, "#0a0a0a");
    for (let y = 5; y < 140; y += 5) rect(svg, 3, y, 15, 3, "#1f1f1f");
    for (let i = 0; i <= 30; i++) line(svg, 19, 5 + i * 4.5, i % 6 ? 22 : 24, 5 + i * 4.5, "#8f8f8f", i % 6 ? 1 : 1.5);
    for (let i = 0; i < 5; i++) label(svg, 29, 10 + i * 26.7, i ? String(-6 * i) : "0", "start", "#8f8f8f", 11);
    label(svg, 29, 140, "dB", "start", "#8f8f8f", 11);
}
```
